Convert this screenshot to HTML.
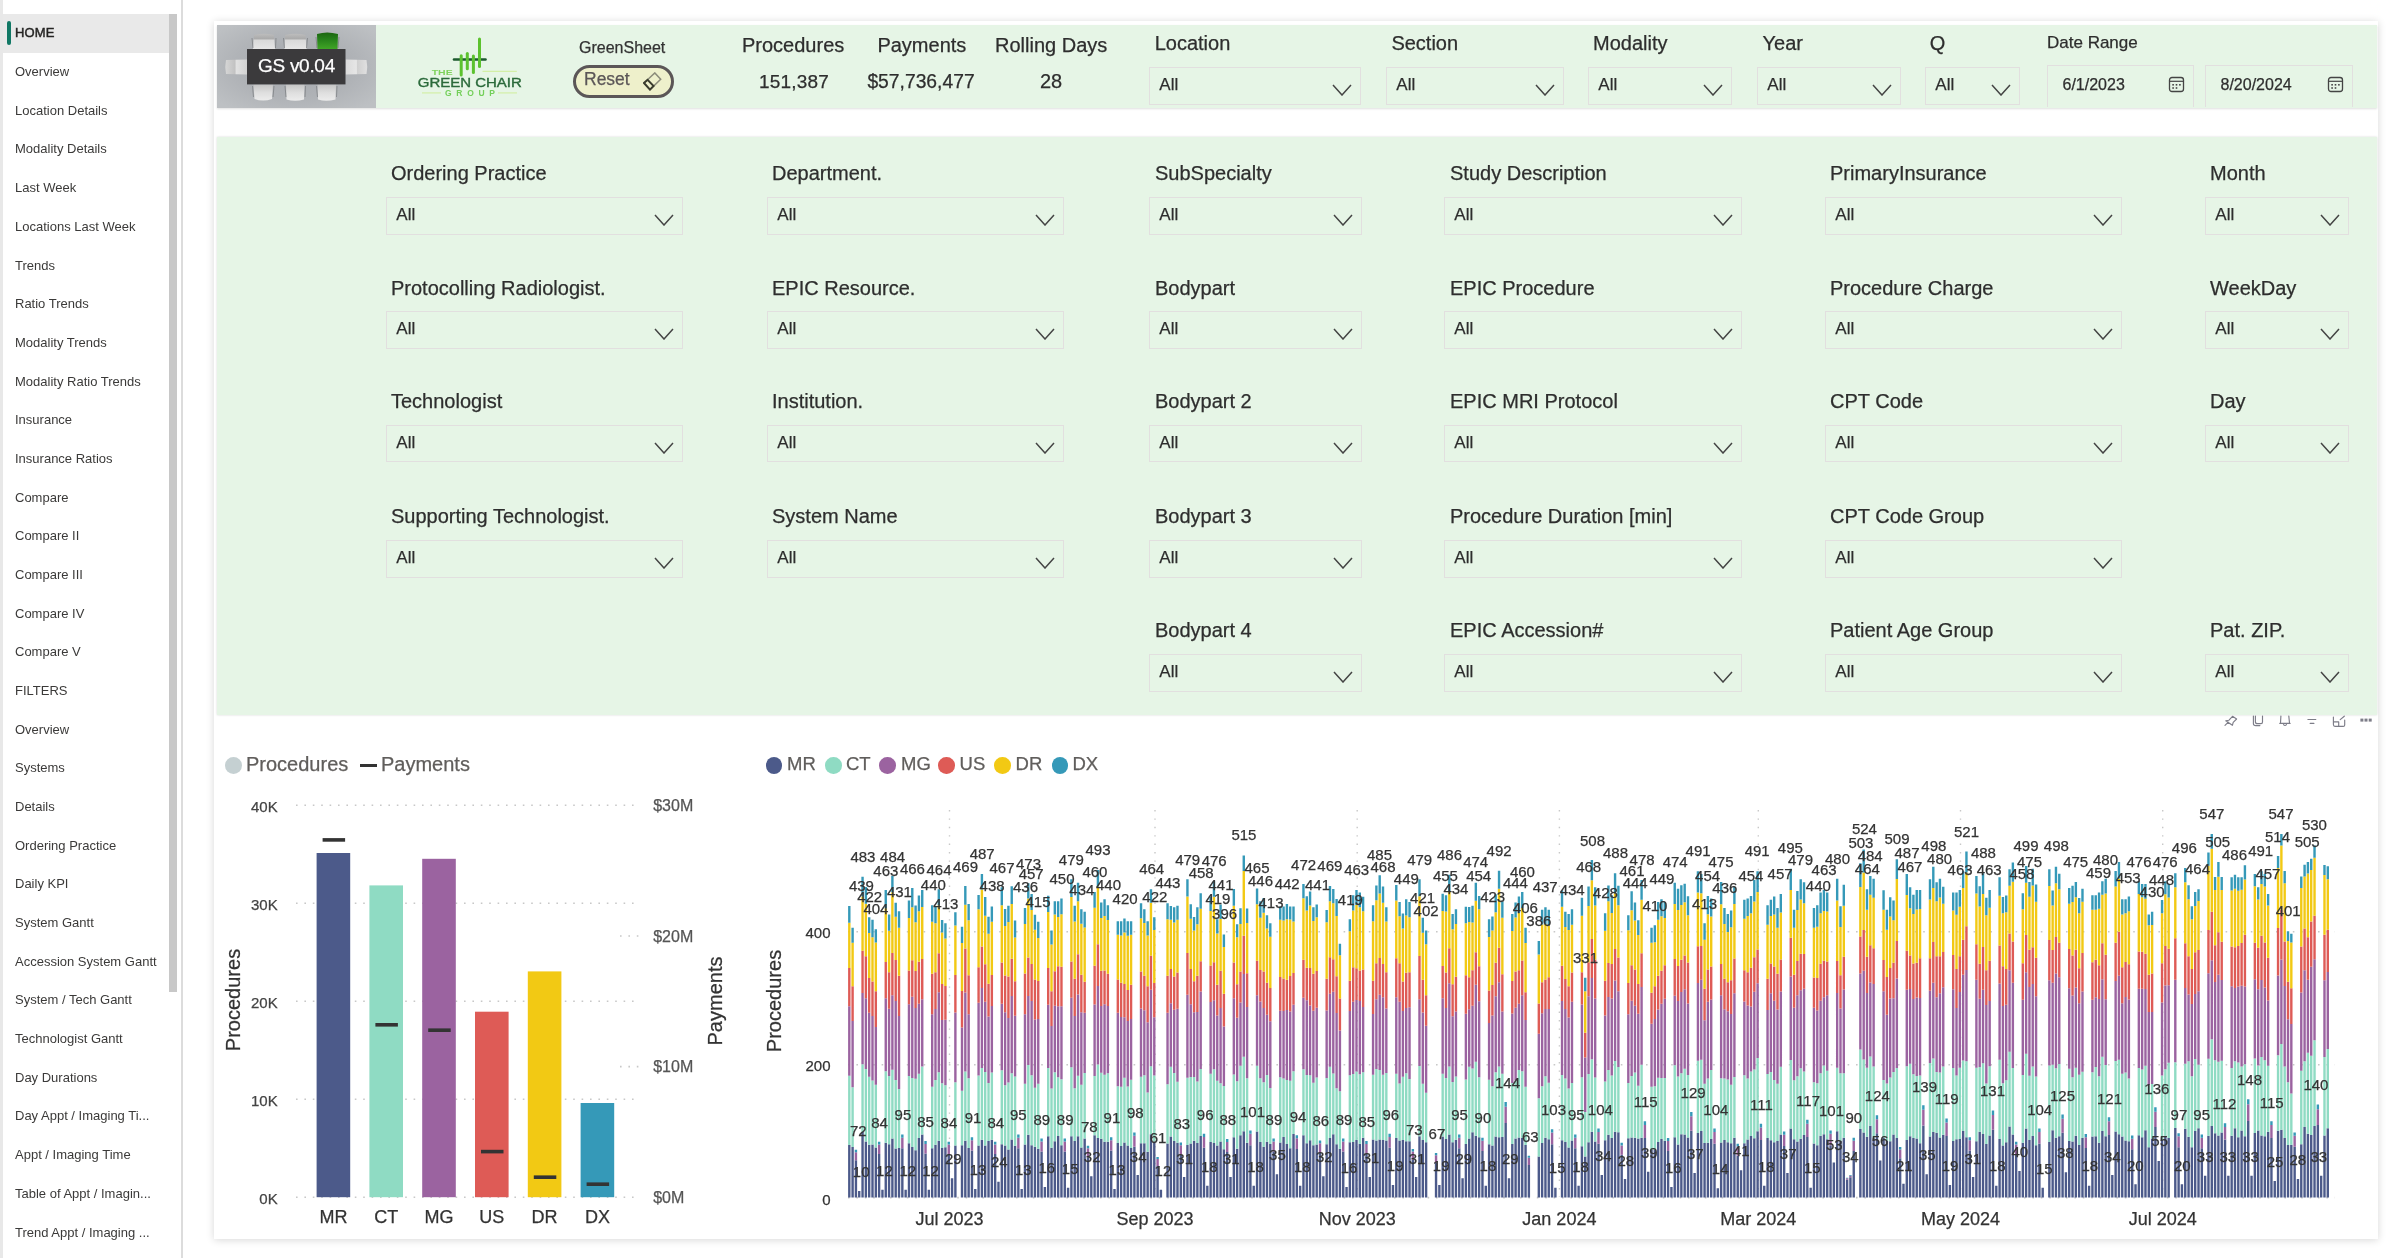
<!DOCTYPE html>
<html><head><meta charset="utf-8"><style>
html,body{margin:0;padding:0;}
body{width:2399px;height:1258px;position:relative;overflow:hidden;background:#fff;font-family:"Liberation Sans", sans-serif;}
.t{position:absolute;white-space:nowrap;line-height:1;font-family:"Liberation Sans", sans-serif;-webkit-text-stroke:0.25px currentColor;}
</style></head><body><div style="position:absolute;left:0;top:0;width:2399px;height:1258px;overflow:hidden;will-change:transform;">
<div style="position:absolute;left:0px;top:0px;width:3px;height:1258px;background:#e8e8e8;"></div>
<div style="position:absolute;left:3px;top:14px;width:166px;height:39px;background:#e9e9e9;"></div>
<div style="position:absolute;left:7px;top:20.5px;width:4px;height:24.5px;background:#117865;border-radius:2px;"></div>
<div style="position:absolute;left:169px;top:14px;width:8px;height:978px;background:#c8c8c8;"></div>
<div style="position:absolute;left:181px;top:0px;width:2px;height:1258px;background:#dcdcdc;"></div>
<div class="t" style="left:15.0px;top:26.4px;font-size:13px;color:#252423;font-weight:normal;-webkit-text-stroke:0.45px #252423;letter-spacing:0.1px;">HOME</div>
<div class="t" style="left:15.0px;top:65.1px;font-size:13px;color:#3b3a39;font-weight:normal;-webkit-text-stroke:0;">Overview</div>
<div class="t" style="left:15.0px;top:103.8px;font-size:13px;color:#3b3a39;font-weight:normal;-webkit-text-stroke:0;">Location Details</div>
<div class="t" style="left:15.0px;top:142.4px;font-size:13px;color:#3b3a39;font-weight:normal;-webkit-text-stroke:0;">Modality Details</div>
<div class="t" style="left:15.0px;top:181.1px;font-size:13px;color:#3b3a39;font-weight:normal;-webkit-text-stroke:0;">Last Week</div>
<div class="t" style="left:15.0px;top:219.8px;font-size:13px;color:#3b3a39;font-weight:normal;-webkit-text-stroke:0;">Locations Last Week</div>
<div class="t" style="left:15.0px;top:258.5px;font-size:13px;color:#3b3a39;font-weight:normal;-webkit-text-stroke:0;">Trends</div>
<div class="t" style="left:15.0px;top:297.2px;font-size:13px;color:#3b3a39;font-weight:normal;-webkit-text-stroke:0;">Ratio Trends</div>
<div class="t" style="left:15.0px;top:335.8px;font-size:13px;color:#3b3a39;font-weight:normal;-webkit-text-stroke:0;">Modality Trends</div>
<div class="t" style="left:15.0px;top:374.5px;font-size:13px;color:#3b3a39;font-weight:normal;-webkit-text-stroke:0;">Modality Ratio Trends</div>
<div class="t" style="left:15.0px;top:413.2px;font-size:13px;color:#3b3a39;font-weight:normal;-webkit-text-stroke:0;">Insurance</div>
<div class="t" style="left:15.0px;top:451.9px;font-size:13px;color:#3b3a39;font-weight:normal;-webkit-text-stroke:0;">Insurance Ratios</div>
<div class="t" style="left:15.0px;top:490.6px;font-size:13px;color:#3b3a39;font-weight:normal;-webkit-text-stroke:0;">Compare</div>
<div class="t" style="left:15.0px;top:529.2px;font-size:13px;color:#3b3a39;font-weight:normal;-webkit-text-stroke:0;">Compare II</div>
<div class="t" style="left:15.0px;top:567.9px;font-size:13px;color:#3b3a39;font-weight:normal;-webkit-text-stroke:0;">Compare III</div>
<div class="t" style="left:15.0px;top:606.6px;font-size:13px;color:#3b3a39;font-weight:normal;-webkit-text-stroke:0;">Compare IV</div>
<div class="t" style="left:15.0px;top:645.3px;font-size:13px;color:#3b3a39;font-weight:normal;-webkit-text-stroke:0;">Compare V</div>
<div class="t" style="left:15.0px;top:684.0px;font-size:13px;color:#3b3a39;font-weight:normal;-webkit-text-stroke:0;">FILTERS</div>
<div class="t" style="left:15.0px;top:722.6px;font-size:13px;color:#3b3a39;font-weight:normal;-webkit-text-stroke:0;">Overview</div>
<div class="t" style="left:15.0px;top:761.3px;font-size:13px;color:#3b3a39;font-weight:normal;-webkit-text-stroke:0;">Systems</div>
<div class="t" style="left:15.0px;top:800.0px;font-size:13px;color:#3b3a39;font-weight:normal;-webkit-text-stroke:0;">Details</div>
<div class="t" style="left:15.0px;top:838.7px;font-size:13px;color:#3b3a39;font-weight:normal;-webkit-text-stroke:0;">Ordering Practice</div>
<div class="t" style="left:15.0px;top:877.4px;font-size:13px;color:#3b3a39;font-weight:normal;-webkit-text-stroke:0;">Daily KPI</div>
<div class="t" style="left:15.0px;top:916.0px;font-size:13px;color:#3b3a39;font-weight:normal;-webkit-text-stroke:0;">System Gantt</div>
<div class="t" style="left:15.0px;top:954.7px;font-size:13px;color:#3b3a39;font-weight:normal;-webkit-text-stroke:0;">Accession System Gantt</div>
<div class="t" style="left:15.0px;top:993.4px;font-size:13px;color:#3b3a39;font-weight:normal;-webkit-text-stroke:0;">System / Tech Gantt</div>
<div class="t" style="left:15.0px;top:1032.1px;font-size:13px;color:#3b3a39;font-weight:normal;-webkit-text-stroke:0;">Technologist Gantt</div>
<div class="t" style="left:15.0px;top:1070.8px;font-size:13px;color:#3b3a39;font-weight:normal;-webkit-text-stroke:0;">Day Durations</div>
<div class="t" style="left:15.0px;top:1109.4px;font-size:13px;color:#3b3a39;font-weight:normal;-webkit-text-stroke:0;">Day Appt / Imaging Ti...</div>
<div class="t" style="left:15.0px;top:1148.1px;font-size:13px;color:#3b3a39;font-weight:normal;-webkit-text-stroke:0;">Appt / Imaging Time</div>
<div class="t" style="left:15.0px;top:1186.8px;font-size:13px;color:#3b3a39;font-weight:normal;-webkit-text-stroke:0;">Table of Appt / Imagin...</div>
<div class="t" style="left:15.0px;top:1225.5px;font-size:13px;color:#3b3a39;font-weight:normal;-webkit-text-stroke:0;">Trend Appt / Imaging ...</div>
<div style="position:absolute;left:214px;top:21px;width:2164px;height:1218px;background:#fff;box-shadow:0 1px 8px rgba(0,0,0,0.16);"></div>
<svg style="position:absolute;left:2220px;top:714px" width="160" height="16" viewBox="0 0 160 16" fill="none" stroke="#7d7d88" stroke-width="1.15" stroke-linejoin="round" stroke-linecap="round">
<path d="M5 11.3 L8.3 8.2 M5.75 6.75 L9 6.2 L12.5 2.3 L16.6 5 L13.2 8.4 L12.4 11.3 Z"/>
<path d="M33.4 2 V9.4 Q33.4 11.6 35.8 11.6 H39.9 M35.4 2 V7.9 Q35.4 9.6 37.6 9.6 H41 Q42.5 9.6 42.5 7.9 V2"/>
<path d="M60.9 2 L60.5 9 M68.8 2 L69.5 9 M59.8 9.4 H70.1 M63.5 10.6 Q65 12.3 66.5 10.6"/>
<path d="M87.9 5.5 H95.8 M90.2 9.4 H93.9"/>
<path d="M113.4 3 V10.5 Q113.4 12.4 115 12.4 H123.2 Q124.7 12.4 124.7 10.9 V6 M113.8 7.9 H118.7 V12.4 M120.2 5.6 L124.3 2.2"/>
<g fill="#7d7d88" stroke="none"><rect x="140.4" y="4.6" width="3" height="3"/><rect x="144.5" y="4.6" width="3" height="3"/><rect x="148.7" y="4.6" width="3" height="3"/></g>
</svg>
<div style="position:absolute;left:217px;top:25px;width:2160px;height:83px;background:#e6f5e6;box-shadow:0 1px 2px rgba(0,0,0,0.13);"></div>
<div style="position:absolute;left:217px;top:137px;width:2160px;height:578px;background:#e6f5e6;box-shadow:0 0 2px rgba(0,0,0,0.16);"></div>
<svg style="position:absolute;left:217px;top:25px" width="159" height="83" viewBox="0 0 159 83">
<defs>
<radialGradient id="bgg" cx="50%" cy="50%" r="65%"><stop offset="0" stop-color="#a3a6ab"/><stop offset="0.6" stop-color="#b0b3b7"/><stop offset="1" stop-color="#bdc0c3"/></radialGradient>
<linearGradient id="gch" x1="0" y1="0" x2="0" y2="1"><stop offset="0" stop-color="#1c6611"/><stop offset="0.4" stop-color="#26801a"/><stop offset="1" stop-color="#40a526"/></linearGradient>
<linearGradient id="wct" x1="0" y1="0" x2="0" y2="1"><stop offset="0" stop-color="#bdbdbd"/><stop offset="0.35" stop-color="#a9a9a9"/><stop offset="0.4" stop-color="#d9d9d9"/><stop offset="1" stop-color="#e6e6e6"/></linearGradient>
<linearGradient id="wcb" x1="0" y1="0" x2="0" y2="1"><stop offset="0" stop-color="#c4c4c4"/><stop offset="0.5" stop-color="#dedede"/><stop offset="1" stop-color="#ececec"/></linearGradient>
<linearGradient id="wcl" x1="0" y1="0" x2="1" y2="0"><stop offset="0" stop-color="#d6d6d6"/><stop offset="0.45" stop-color="#c2c2c2"/><stop offset="0.5" stop-color="#e2e2e2"/><stop offset="1" stop-color="#d2d2d2"/></linearGradient>
<linearGradient id="wcr" x1="1" y1="0" x2="0" y2="0"><stop offset="0" stop-color="#e0e0e0"/><stop offset="0.45" stop-color="#d0d0d0"/><stop offset="0.5" stop-color="#e6e6e6"/><stop offset="1" stop-color="#dadada"/></linearGradient>
</defs>
<rect width="159" height="83" fill="url(#bgg)"/>
<path d="M37 10 Q47 7.5 57 10 L58 24 L36 24 Z" fill="url(#wct)"/>
<path d="M68 10 Q78 7.5 88.5 10 L89.5 24 L67.5 24 Z" fill="url(#wct)"/>
<path d="M100 9 Q110 6 121 9 L120.5 24 L100.5 24 Z" fill="url(#gch)"/>
<path d="M36.5 59.5 L56 59.5 L55 74 Q46 77 37.5 74 Z" fill="url(#wcb)"/>
<path d="M69 59.5 L87.5 59.5 L87 74.5 Q78 77 69.5 74.5 Z" fill="url(#wcb)"/>
<path d="M100.5 59.5 L119 59.5 L118.5 74.5 Q109 77 101 74.5 Z" fill="url(#wcb)"/>
<path d="M9 35 L30 34.5 L30 49.5 L9 49 Q7.5 42 9 35 Z" fill="url(#wcl)"/>
<path d="M128.5 34.5 L149.5 35 Q151 42 149.5 49 L128.5 49.5 Z" fill="url(#wcr)"/>
<g stroke="#6b6d70" stroke-width="0.8" fill="none" opacity="0.7">
<path d="M35 13 L36 23 M59 13 L58.5 23 M66.5 13 L67.5 23 M90.5 13 L89.5 23 M99 12 L100 23 M122 12 L121 23"/>
<path d="M35.5 61 L36.5 72 M57 61 L56 72 M68 61 L69 72 M88.5 61 L88 72 M99.5 61 L100.5 72 M120 61 L119.5 72"/>
</g>
<rect x="30" y="24" width="98.5" height="35.4" fill="#3b3a3c"/>
</svg>
<div class="t" style="left:296.5px;transform:translateX(-50%);top:56.0px;font-size:19px;color:#fff;font-weight:normal;letter-spacing:-0.3px;">GS v0.04</div>
<svg style="position:absolute;left:410px;top:30px" width="120" height="70" viewBox="0 0 120 70">
<g stroke-linecap="round">
<line x1="44" y1="29.5" x2="75.5" y2="29.5" stroke="#1d5a2e" stroke-width="2.6"/>
<line x1="51.2" y1="25.8" x2="51.2" y2="45" stroke="#5cc22e" stroke-width="3"/>
<line x1="57.3" y1="23.5" x2="57.3" y2="38.7" stroke="#5cc22e" stroke-width="3"/>
<line x1="63.4" y1="26" x2="63.4" y2="42.5" stroke="#5cc22e" stroke-width="3"/>
<line x1="69.5" y1="9" x2="69.5" y2="36.5" stroke="#5cc22e" stroke-width="3"/>
</g>
<line x1="72.5" y1="41.4" x2="106.8" y2="41.4" stroke="#d3efa6" stroke-width="1.2"/>
<line x1="12" y1="62.9" x2="31" y2="62.9" stroke="#d3efa6" stroke-width="1.2"/>
<line x1="88" y1="62.9" x2="107" y2="62.9" stroke="#d3efa6" stroke-width="1.2"/>
<text x="21.7" y="44.8" font-family="Liberation Sans" font-weight="bold" font-size="7.6" fill="#7ed25c" textLength="21" lengthAdjust="spacingAndGlyphs">THE</text>
<text x="7.8" y="56.5" font-family="Liberation Sans" font-size="12" fill="#2b6a3b" stroke="#2b6a3b" stroke-width="0.35" textLength="104" lengthAdjust="spacingAndGlyphs">GREEN CHAIR</text>
<text x="35" y="65.6" font-family="Liberation Sans" font-weight="bold" font-size="8.5" fill="#74cf5a" textLength="50" lengthAdjust="spacing">GROUP</text>
</svg>
<div class="t" style="left:579.0px;top:40.3px;font-size:16px;color:#333;font-weight:normal;">GreenSheet</div>
<div style="position:absolute;left:573px;top:65px;width:95px;height:27px;border:3px solid #5b5657;border-radius:17px;background:#eef0cb;"></div>
<div class="t" style="left:584.0px;top:71.2px;font-size:17.5px;color:#5b5657;font-weight:normal;">Reset</div>
<svg style="position:absolute;left:643px;top:72px" width="20" height="20" viewBox="0 0 20 20">
<path d="M1 11 L7 17.6 L17.7 7.2 L11.8 0.9 Z" fill="none" stroke="#8c8c7a" stroke-width="1.5" stroke-linejoin="miter"/>
<path d="M1 11 L7 17.6 L10.6 14 L4.6 7.8 Z" fill="none" stroke="#3a3c2e" stroke-width="1.9"/>
</svg>
<div class="t" style="left:742.0px;top:35.3px;font-size:20px;color:#2e2e2e;font-weight:normal;">Procedures</div>
<div class="t" style="left:794.0px;transform:translateX(-50%);top:71.9px;font-size:19px;color:#2e2e2e;font-weight:normal;letter-spacing:0.2px;">151,387</div>
<div class="t" style="left:877.4px;top:35.3px;font-size:20px;color:#2e2e2e;font-weight:normal;">Payments</div>
<div class="t" style="left:921.0px;transform:translateX(-50%);top:71.7px;font-size:19.3px;color:#2e2e2e;font-weight:normal;">$57,736,477</div>
<div class="t" style="left:995.0px;top:35.3px;font-size:20px;color:#2e2e2e;font-weight:normal;">Rolling Days</div>
<div class="t" style="left:1051.0px;transform:translateX(-50%);top:71.1px;font-size:20px;color:#2e2e2e;font-weight:normal;">28</div>
<div class="t" style="left:1154.7px;top:33.4px;font-size:20px;color:#2e2e2e;font-weight:normal;">Location</div>
<div style="position:absolute;left:1149px;top:67px;width:210px;height:36px;border:1px solid #e2dfdf;"></div>
<div class="t" style="left:1159.3px;top:76.4px;font-size:17px;color:#2e2e2e;font-weight:normal;">All</div>
<svg style="position:absolute;left:1332.0px;top:84.0px" width="20" height="12"><polyline points="1,1 10.0,11 19,1" fill="none" stroke="#444" stroke-width="1.5"/></svg>
<div class="t" style="left:1391.4px;top:33.4px;font-size:20px;color:#2e2e2e;font-weight:normal;">Section</div>
<div style="position:absolute;left:1386px;top:67px;width:176px;height:36px;border:1px solid #e2dfdf;"></div>
<div class="t" style="left:1396.3px;top:76.4px;font-size:17px;color:#2e2e2e;font-weight:normal;">All</div>
<svg style="position:absolute;left:1535.0px;top:84.0px" width="20" height="12"><polyline points="1,1 10.0,11 19,1" fill="none" stroke="#444" stroke-width="1.5"/></svg>
<div class="t" style="left:1593.0px;top:33.4px;font-size:20px;color:#2e2e2e;font-weight:normal;">Modality</div>
<div style="position:absolute;left:1588px;top:67px;width:142px;height:36px;border:1px solid #e2dfdf;"></div>
<div class="t" style="left:1598.3px;top:76.4px;font-size:17px;color:#2e2e2e;font-weight:normal;">All</div>
<svg style="position:absolute;left:1703.0px;top:84.0px" width="20" height="12"><polyline points="1,1 10.0,11 19,1" fill="none" stroke="#444" stroke-width="1.5"/></svg>
<div class="t" style="left:1762.5px;top:33.4px;font-size:20px;color:#2e2e2e;font-weight:normal;">Year</div>
<div style="position:absolute;left:1757px;top:67px;width:142px;height:36px;border:1px solid #e2dfdf;"></div>
<div class="t" style="left:1767.3px;top:76.4px;font-size:17px;color:#2e2e2e;font-weight:normal;">All</div>
<svg style="position:absolute;left:1872.0px;top:84.0px" width="20" height="12"><polyline points="1,1 10.0,11 19,1" fill="none" stroke="#444" stroke-width="1.5"/></svg>
<div class="t" style="left:1929.7px;top:33.4px;font-size:20px;color:#2e2e2e;font-weight:normal;">Q</div>
<div style="position:absolute;left:1925px;top:67px;width:93px;height:36px;border:1px solid #e2dfdf;"></div>
<div class="t" style="left:1935.3px;top:76.4px;font-size:17px;color:#2e2e2e;font-weight:normal;">All</div>
<svg style="position:absolute;left:1991.0px;top:84.0px" width="20" height="12"><polyline points="1,1 10.0,11 19,1" fill="none" stroke="#444" stroke-width="1.5"/></svg>
<div class="t" style="left:2047.0px;top:34.1px;font-size:17px;color:#2e2e2e;font-weight:normal;">Date Range</div>
<div style="position:absolute;left:2047px;top:65px;width:145px;height:41px;border:1px solid #e2dfdf;border-bottom:none;"></div>
<div class="t" style="left:2062.5px;top:77.2px;font-size:16px;color:#2e2e2e;font-weight:normal;">6/1/2023</div>
<svg style="position:absolute;left:2168px;top:76px" width="17" height="17" viewBox="0 0 17 17"><rect x="1.5" y="1.5" width="14" height="14" rx="2.5" fill="none" stroke="#444" stroke-width="1.3"/><line x1="1.5" y1="5.3" x2="15.5" y2="5.3" stroke="#444" stroke-width="1.2"/><g fill="#444"><rect x="4.3" y="8" width="1.6" height="1.6"/><rect x="7.7" y="8" width="1.6" height="1.6"/><rect x="11.1" y="8" width="1.6" height="1.6"/><rect x="4.3" y="11.2" width="1.6" height="1.6"/><rect x="7.7" y="11.2" width="1.6" height="1.6"/></g></svg>
<div style="position:absolute;left:2205px;top:65px;width:146px;height:41px;border:1px solid #e2dfdf;border-bottom:none;"></div>
<div class="t" style="left:2220.5px;top:77.2px;font-size:16px;color:#2e2e2e;font-weight:normal;">8/20/2024</div>
<svg style="position:absolute;left:2327px;top:76px" width="17" height="17" viewBox="0 0 17 17"><rect x="1.5" y="1.5" width="14" height="14" rx="2.5" fill="none" stroke="#444" stroke-width="1.3"/><line x1="1.5" y1="5.3" x2="15.5" y2="5.3" stroke="#444" stroke-width="1.2"/><g fill="#444"><rect x="4.3" y="8" width="1.6" height="1.6"/><rect x="7.7" y="8" width="1.6" height="1.6"/><rect x="11.1" y="8" width="1.6" height="1.6"/><rect x="4.3" y="11.2" width="1.6" height="1.6"/><rect x="7.7" y="11.2" width="1.6" height="1.6"/></g></svg>
<div class="t" style="left:391.0px;top:163.3px;font-size:20px;color:#2e2e2e;font-weight:normal;">Ordering Practice</div>
<div style="position:absolute;left:386px;top:197px;width:295px;height:36px;border:1px solid #e2dfdf;"></div>
<div class="t" style="left:396.3px;top:206.4px;font-size:17px;color:#2e2e2e;font-weight:normal;">All</div>
<svg style="position:absolute;left:654.0px;top:214.0px" width="20" height="12"><polyline points="1,1 10.0,11 19,1" fill="none" stroke="#444" stroke-width="1.5"/></svg>
<div class="t" style="left:391.0px;top:277.6px;font-size:20px;color:#2e2e2e;font-weight:normal;">Protocolling Radiologist.</div>
<div style="position:absolute;left:386px;top:311px;width:295px;height:36px;border:1px solid #e2dfdf;"></div>
<div class="t" style="left:396.3px;top:320.4px;font-size:17px;color:#2e2e2e;font-weight:normal;">All</div>
<svg style="position:absolute;left:654.0px;top:328.0px" width="20" height="12"><polyline points="1,1 10.0,11 19,1" fill="none" stroke="#444" stroke-width="1.5"/></svg>
<div class="t" style="left:391.0px;top:391.1px;font-size:20px;color:#2e2e2e;font-weight:normal;">Technologist</div>
<div style="position:absolute;left:386px;top:425px;width:295px;height:35px;border:1px solid #e2dfdf;"></div>
<div class="t" style="left:396.3px;top:434.4px;font-size:17px;color:#2e2e2e;font-weight:normal;">All</div>
<svg style="position:absolute;left:654.0px;top:442.0px" width="20" height="12"><polyline points="1,1 10.0,11 19,1" fill="none" stroke="#444" stroke-width="1.5"/></svg>
<div class="t" style="left:391.0px;top:506.1px;font-size:20px;color:#2e2e2e;font-weight:normal;">Supporting Technologist.</div>
<div style="position:absolute;left:386px;top:540px;width:295px;height:36px;border:1px solid #e2dfdf;"></div>
<div class="t" style="left:396.3px;top:549.4px;font-size:17px;color:#2e2e2e;font-weight:normal;">All</div>
<svg style="position:absolute;left:654.0px;top:557.0px" width="20" height="12"><polyline points="1,1 10.0,11 19,1" fill="none" stroke="#444" stroke-width="1.5"/></svg>
<div class="t" style="left:772.0px;top:163.3px;font-size:20px;color:#2e2e2e;font-weight:normal;">Department.</div>
<div style="position:absolute;left:767px;top:197px;width:295px;height:36px;border:1px solid #e2dfdf;"></div>
<div class="t" style="left:777.3px;top:206.4px;font-size:17px;color:#2e2e2e;font-weight:normal;">All</div>
<svg style="position:absolute;left:1035.0px;top:214.0px" width="20" height="12"><polyline points="1,1 10.0,11 19,1" fill="none" stroke="#444" stroke-width="1.5"/></svg>
<div class="t" style="left:772.0px;top:277.6px;font-size:20px;color:#2e2e2e;font-weight:normal;">EPIC Resource.</div>
<div style="position:absolute;left:767px;top:311px;width:295px;height:36px;border:1px solid #e2dfdf;"></div>
<div class="t" style="left:777.3px;top:320.4px;font-size:17px;color:#2e2e2e;font-weight:normal;">All</div>
<svg style="position:absolute;left:1035.0px;top:328.0px" width="20" height="12"><polyline points="1,1 10.0,11 19,1" fill="none" stroke="#444" stroke-width="1.5"/></svg>
<div class="t" style="left:772.0px;top:391.1px;font-size:20px;color:#2e2e2e;font-weight:normal;">Institution.</div>
<div style="position:absolute;left:767px;top:425px;width:295px;height:35px;border:1px solid #e2dfdf;"></div>
<div class="t" style="left:777.3px;top:434.4px;font-size:17px;color:#2e2e2e;font-weight:normal;">All</div>
<svg style="position:absolute;left:1035.0px;top:442.0px" width="20" height="12"><polyline points="1,1 10.0,11 19,1" fill="none" stroke="#444" stroke-width="1.5"/></svg>
<div class="t" style="left:772.0px;top:506.1px;font-size:20px;color:#2e2e2e;font-weight:normal;">System Name</div>
<div style="position:absolute;left:767px;top:540px;width:295px;height:36px;border:1px solid #e2dfdf;"></div>
<div class="t" style="left:777.3px;top:549.4px;font-size:17px;color:#2e2e2e;font-weight:normal;">All</div>
<svg style="position:absolute;left:1035.0px;top:557.0px" width="20" height="12"><polyline points="1,1 10.0,11 19,1" fill="none" stroke="#444" stroke-width="1.5"/></svg>
<div class="t" style="left:1155.0px;top:163.3px;font-size:20px;color:#2e2e2e;font-weight:normal;">SubSpecialty</div>
<div style="position:absolute;left:1149px;top:197px;width:211px;height:36px;border:1px solid #e2dfdf;"></div>
<div class="t" style="left:1159.3px;top:206.4px;font-size:17px;color:#2e2e2e;font-weight:normal;">All</div>
<svg style="position:absolute;left:1333.0px;top:214.0px" width="20" height="12"><polyline points="1,1 10.0,11 19,1" fill="none" stroke="#444" stroke-width="1.5"/></svg>
<div class="t" style="left:1155.0px;top:277.6px;font-size:20px;color:#2e2e2e;font-weight:normal;">Bodypart</div>
<div style="position:absolute;left:1149px;top:311px;width:211px;height:36px;border:1px solid #e2dfdf;"></div>
<div class="t" style="left:1159.3px;top:320.4px;font-size:17px;color:#2e2e2e;font-weight:normal;">All</div>
<svg style="position:absolute;left:1333.0px;top:328.0px" width="20" height="12"><polyline points="1,1 10.0,11 19,1" fill="none" stroke="#444" stroke-width="1.5"/></svg>
<div class="t" style="left:1155.0px;top:391.1px;font-size:20px;color:#2e2e2e;font-weight:normal;">Bodypart 2</div>
<div style="position:absolute;left:1149px;top:425px;width:211px;height:35px;border:1px solid #e2dfdf;"></div>
<div class="t" style="left:1159.3px;top:434.4px;font-size:17px;color:#2e2e2e;font-weight:normal;">All</div>
<svg style="position:absolute;left:1333.0px;top:442.0px" width="20" height="12"><polyline points="1,1 10.0,11 19,1" fill="none" stroke="#444" stroke-width="1.5"/></svg>
<div class="t" style="left:1155.0px;top:506.1px;font-size:20px;color:#2e2e2e;font-weight:normal;">Bodypart 3</div>
<div style="position:absolute;left:1149px;top:540px;width:211px;height:36px;border:1px solid #e2dfdf;"></div>
<div class="t" style="left:1159.3px;top:549.4px;font-size:17px;color:#2e2e2e;font-weight:normal;">All</div>
<svg style="position:absolute;left:1333.0px;top:557.0px" width="20" height="12"><polyline points="1,1 10.0,11 19,1" fill="none" stroke="#444" stroke-width="1.5"/></svg>
<div class="t" style="left:1155.0px;top:619.6px;font-size:20px;color:#2e2e2e;font-weight:normal;">Bodypart 4</div>
<div style="position:absolute;left:1149px;top:654px;width:211px;height:36px;border:1px solid #e2dfdf;"></div>
<div class="t" style="left:1159.3px;top:663.4px;font-size:17px;color:#2e2e2e;font-weight:normal;">All</div>
<svg style="position:absolute;left:1333.0px;top:671.0px" width="20" height="12"><polyline points="1,1 10.0,11 19,1" fill="none" stroke="#444" stroke-width="1.5"/></svg>
<div class="t" style="left:1450.0px;top:163.3px;font-size:20px;color:#2e2e2e;font-weight:normal;">Study Description</div>
<div style="position:absolute;left:1444px;top:197px;width:296px;height:36px;border:1px solid #e2dfdf;"></div>
<div class="t" style="left:1454.3px;top:206.4px;font-size:17px;color:#2e2e2e;font-weight:normal;">All</div>
<svg style="position:absolute;left:1713.0px;top:214.0px" width="20" height="12"><polyline points="1,1 10.0,11 19,1" fill="none" stroke="#444" stroke-width="1.5"/></svg>
<div class="t" style="left:1450.0px;top:277.6px;font-size:20px;color:#2e2e2e;font-weight:normal;">EPIC Procedure</div>
<div style="position:absolute;left:1444px;top:311px;width:296px;height:36px;border:1px solid #e2dfdf;"></div>
<div class="t" style="left:1454.3px;top:320.4px;font-size:17px;color:#2e2e2e;font-weight:normal;">All</div>
<svg style="position:absolute;left:1713.0px;top:328.0px" width="20" height="12"><polyline points="1,1 10.0,11 19,1" fill="none" stroke="#444" stroke-width="1.5"/></svg>
<div class="t" style="left:1450.0px;top:391.1px;font-size:20px;color:#2e2e2e;font-weight:normal;">EPIC MRI Protocol</div>
<div style="position:absolute;left:1444px;top:425px;width:296px;height:35px;border:1px solid #e2dfdf;"></div>
<div class="t" style="left:1454.3px;top:434.4px;font-size:17px;color:#2e2e2e;font-weight:normal;">All</div>
<svg style="position:absolute;left:1713.0px;top:442.0px" width="20" height="12"><polyline points="1,1 10.0,11 19,1" fill="none" stroke="#444" stroke-width="1.5"/></svg>
<div class="t" style="left:1450.0px;top:506.1px;font-size:20px;color:#2e2e2e;font-weight:normal;">Procedure Duration [min]</div>
<div style="position:absolute;left:1444px;top:540px;width:296px;height:36px;border:1px solid #e2dfdf;"></div>
<div class="t" style="left:1454.3px;top:549.4px;font-size:17px;color:#2e2e2e;font-weight:normal;">All</div>
<svg style="position:absolute;left:1713.0px;top:557.0px" width="20" height="12"><polyline points="1,1 10.0,11 19,1" fill="none" stroke="#444" stroke-width="1.5"/></svg>
<div class="t" style="left:1450.0px;top:619.6px;font-size:20px;color:#2e2e2e;font-weight:normal;">EPIC Accession#</div>
<div style="position:absolute;left:1444px;top:654px;width:296px;height:36px;border:1px solid #e2dfdf;"></div>
<div class="t" style="left:1454.3px;top:663.4px;font-size:17px;color:#2e2e2e;font-weight:normal;">All</div>
<svg style="position:absolute;left:1713.0px;top:671.0px" width="20" height="12"><polyline points="1,1 10.0,11 19,1" fill="none" stroke="#444" stroke-width="1.5"/></svg>
<div class="t" style="left:1830.0px;top:163.3px;font-size:20px;color:#2e2e2e;font-weight:normal;">PrimaryInsurance</div>
<div style="position:absolute;left:1825px;top:197px;width:295px;height:36px;border:1px solid #e2dfdf;"></div>
<div class="t" style="left:1835.3px;top:206.4px;font-size:17px;color:#2e2e2e;font-weight:normal;">All</div>
<svg style="position:absolute;left:2093.0px;top:214.0px" width="20" height="12"><polyline points="1,1 10.0,11 19,1" fill="none" stroke="#444" stroke-width="1.5"/></svg>
<div class="t" style="left:1830.0px;top:277.6px;font-size:20px;color:#2e2e2e;font-weight:normal;">Procedure Charge</div>
<div style="position:absolute;left:1825px;top:311px;width:295px;height:36px;border:1px solid #e2dfdf;"></div>
<div class="t" style="left:1835.3px;top:320.4px;font-size:17px;color:#2e2e2e;font-weight:normal;">All</div>
<svg style="position:absolute;left:2093.0px;top:328.0px" width="20" height="12"><polyline points="1,1 10.0,11 19,1" fill="none" stroke="#444" stroke-width="1.5"/></svg>
<div class="t" style="left:1830.0px;top:391.1px;font-size:20px;color:#2e2e2e;font-weight:normal;">CPT Code</div>
<div style="position:absolute;left:1825px;top:425px;width:295px;height:35px;border:1px solid #e2dfdf;"></div>
<div class="t" style="left:1835.3px;top:434.4px;font-size:17px;color:#2e2e2e;font-weight:normal;">All</div>
<svg style="position:absolute;left:2093.0px;top:442.0px" width="20" height="12"><polyline points="1,1 10.0,11 19,1" fill="none" stroke="#444" stroke-width="1.5"/></svg>
<div class="t" style="left:1830.0px;top:506.1px;font-size:20px;color:#2e2e2e;font-weight:normal;">CPT Code Group</div>
<div style="position:absolute;left:1825px;top:540px;width:295px;height:36px;border:1px solid #e2dfdf;"></div>
<div class="t" style="left:1835.3px;top:549.4px;font-size:17px;color:#2e2e2e;font-weight:normal;">All</div>
<svg style="position:absolute;left:2093.0px;top:557.0px" width="20" height="12"><polyline points="1,1 10.0,11 19,1" fill="none" stroke="#444" stroke-width="1.5"/></svg>
<div class="t" style="left:1830.0px;top:619.6px;font-size:20px;color:#2e2e2e;font-weight:normal;">Patient Age Group</div>
<div style="position:absolute;left:1825px;top:654px;width:295px;height:36px;border:1px solid #e2dfdf;"></div>
<div class="t" style="left:1835.3px;top:663.4px;font-size:17px;color:#2e2e2e;font-weight:normal;">All</div>
<svg style="position:absolute;left:2093.0px;top:671.0px" width="20" height="12"><polyline points="1,1 10.0,11 19,1" fill="none" stroke="#444" stroke-width="1.5"/></svg>
<div class="t" style="left:2210.0px;top:163.3px;font-size:20px;color:#2e2e2e;font-weight:normal;">Month</div>
<div style="position:absolute;left:2205px;top:197px;width:142px;height:36px;border:1px solid #e2dfdf;"></div>
<div class="t" style="left:2215.3px;top:206.4px;font-size:17px;color:#2e2e2e;font-weight:normal;">All</div>
<svg style="position:absolute;left:2320.0px;top:214.0px" width="20" height="12"><polyline points="1,1 10.0,11 19,1" fill="none" stroke="#444" stroke-width="1.5"/></svg>
<div class="t" style="left:2210.0px;top:277.6px;font-size:20px;color:#2e2e2e;font-weight:normal;">WeekDay</div>
<div style="position:absolute;left:2205px;top:311px;width:142px;height:36px;border:1px solid #e2dfdf;"></div>
<div class="t" style="left:2215.3px;top:320.4px;font-size:17px;color:#2e2e2e;font-weight:normal;">All</div>
<svg style="position:absolute;left:2320.0px;top:328.0px" width="20" height="12"><polyline points="1,1 10.0,11 19,1" fill="none" stroke="#444" stroke-width="1.5"/></svg>
<div class="t" style="left:2210.0px;top:391.1px;font-size:20px;color:#2e2e2e;font-weight:normal;">Day</div>
<div style="position:absolute;left:2205px;top:425px;width:142px;height:35px;border:1px solid #e2dfdf;"></div>
<div class="t" style="left:2215.3px;top:434.4px;font-size:17px;color:#2e2e2e;font-weight:normal;">All</div>
<svg style="position:absolute;left:2320.0px;top:442.0px" width="20" height="12"><polyline points="1,1 10.0,11 19,1" fill="none" stroke="#444" stroke-width="1.5"/></svg>
<div class="t" style="left:2210.0px;top:619.6px;font-size:20px;color:#2e2e2e;font-weight:normal;">Pat. ZIP.</div>
<div style="position:absolute;left:2205px;top:654px;width:142px;height:36px;border:1px solid #e2dfdf;"></div>
<div class="t" style="left:2215.3px;top:663.4px;font-size:17px;color:#2e2e2e;font-weight:normal;">All</div>
<svg style="position:absolute;left:2320.0px;top:671.0px" width="20" height="12"><polyline points="1,1 10.0,11 19,1" fill="none" stroke="#444" stroke-width="1.5"/></svg>
<div style="position:absolute;left:224.7px;top:757px;width:17px;height:17px;border-radius:50%;background:#c5d0d2"></div>
<div class="t" style="left:246.0px;top:753.5px;font-size:20px;color:#605e5c;font-weight:normal;">Procedures</div>
<div style="position:absolute;left:360px;top:764px;width:17px;height:3px;background:#333;"></div>
<div class="t" style="left:381.0px;top:753.5px;font-size:20px;color:#605e5c;font-weight:normal;">Payments</div>
<div class="t" style="right:2121.3px;top:798.5px;font-size:15px;color:#444;font-weight:normal;">40K</div>
<div class="t" style="right:2121.3px;top:896.5px;font-size:15px;color:#444;font-weight:normal;">30K</div>
<div class="t" style="right:2121.3px;top:994.5px;font-size:15px;color:#444;font-weight:normal;">20K</div>
<div class="t" style="right:2121.3px;top:1092.5px;font-size:15px;color:#444;font-weight:normal;">10K</div>
<div class="t" style="right:2121.3px;top:1190.5px;font-size:15px;color:#444;font-weight:normal;">0K</div>
<div class="t" style="left:653.2px;top:797.7px;font-size:16px;color:#555;font-weight:normal;">$30M</div>
<div class="t" style="left:653.2px;top:928.5px;font-size:16px;color:#555;font-weight:normal;">$20M</div>
<div class="t" style="left:653.2px;top:1059.1px;font-size:16px;color:#555;font-weight:normal;">$10M</div>
<div class="t" style="left:653.2px;top:1189.7px;font-size:16px;color:#555;font-weight:normal;">$0M</div>
<div class="t" style="left:333.4px;transform:translateX(-50%);top:1208.1px;font-size:18px;color:#333;font-weight:normal;">MR</div>
<div class="t" style="left:386.2px;transform:translateX(-50%);top:1208.1px;font-size:18px;color:#333;font-weight:normal;">CT</div>
<div class="t" style="left:439.0px;transform:translateX(-50%);top:1208.1px;font-size:18px;color:#333;font-weight:normal;">MG</div>
<div class="t" style="left:491.8px;transform:translateX(-50%);top:1208.1px;font-size:18px;color:#333;font-weight:normal;">US</div>
<div class="t" style="left:544.6px;transform:translateX(-50%);top:1208.1px;font-size:18px;color:#333;font-weight:normal;">DR</div>
<div class="t" style="left:597.4px;transform:translateX(-50%);top:1208.1px;font-size:18px;color:#333;font-weight:normal;">DX</div>
<div class="t" style="left:233px;top:1000px;font-size:20px;color:#333;transform:translate(-50%,-50%) rotate(-90deg);">Procedures</div>
<div class="t" style="left:715px;top:1000.5px;font-size:20px;color:#333;transform:translate(-50%,-50%) rotate(-90deg);">Payments</div>
<div style="position:absolute;left:765.8px;top:757.3px;width:16.6px;height:16.6px;border-radius:50%;background:#4c5a8a"></div>
<div class="t" style="left:787.0px;top:754.9px;font-size:18.5px;color:#605e5c;font-weight:normal;">MR</div>
<div style="position:absolute;left:825px;top:757.3px;width:16.6px;height:16.6px;border-radius:50%;background:#8fdbc3"></div>
<div class="t" style="left:846.0px;top:754.9px;font-size:18.5px;color:#605e5c;font-weight:normal;">CT</div>
<div style="position:absolute;left:879.2px;top:757.3px;width:16.6px;height:16.6px;border-radius:50%;background:#9b63a0"></div>
<div class="t" style="left:901.0px;top:754.9px;font-size:18.5px;color:#605e5c;font-weight:normal;">MG</div>
<div style="position:absolute;left:938.3px;top:757.3px;width:16.6px;height:16.6px;border-radius:50%;background:#de5b56"></div>
<div class="t" style="left:959.6px;top:754.9px;font-size:18.5px;color:#605e5c;font-weight:normal;">US</div>
<div style="position:absolute;left:994px;top:757.3px;width:16.6px;height:16.6px;border-radius:50%;background:#f2c914"></div>
<div class="t" style="left:1015.6px;top:754.9px;font-size:18.5px;color:#605e5c;font-weight:normal;">DR</div>
<div style="position:absolute;left:1051.8px;top:757.3px;width:16.6px;height:16.6px;border-radius:50%;background:#3599b8"></div>
<div class="t" style="left:1072.4px;top:754.9px;font-size:18.5px;color:#605e5c;font-weight:normal;">DX</div>
<div class="t" style="right:1568.5px;top:924.9px;font-size:15px;color:#333;font-weight:normal;">400</div>
<div class="t" style="right:1568.5px;top:1058.3px;font-size:15px;color:#333;font-weight:normal;">200</div>
<div class="t" style="right:1568.4px;top:1191.7px;font-size:15px;color:#333;font-weight:normal;">0</div>
<div class="t" style="left:774px;top:1000.5px;font-size:20px;color:#333;transform:translate(-50%,-50%) rotate(-90deg);">Procedures</div>
<div class="t" style="left:949.5px;transform:translateX(-50%);top:1210.2px;font-size:18px;color:#333;font-weight:normal;">Jul 2023</div>
<div class="t" style="left:1155.0px;transform:translateX(-50%);top:1210.2px;font-size:18px;color:#333;font-weight:normal;">Sep 2023</div>
<div class="t" style="left:1357.2px;transform:translateX(-50%);top:1210.2px;font-size:18px;color:#333;font-weight:normal;">Nov 2023</div>
<div class="t" style="left:1559.4px;transform:translateX(-50%);top:1210.2px;font-size:18px;color:#333;font-weight:normal;">Jan 2024</div>
<div class="t" style="left:1758.3px;transform:translateX(-50%);top:1210.2px;font-size:18px;color:#333;font-weight:normal;">Mar 2024</div>
<div class="t" style="left:1960.5px;transform:translateX(-50%);top:1210.2px;font-size:18px;color:#333;font-weight:normal;">May 2024</div>
<div class="t" style="left:2162.7px;transform:translateX(-50%);top:1210.2px;font-size:18px;color:#333;font-weight:normal;">Jul 2024</div>
<svg style="position:absolute;left:0;top:0" width="2399" height="1258">
<line x1="296" y1="805.2" x2="636" y2="805.2" stroke="#c8c8c8" stroke-width="1.6" stroke-dasharray="1.6 6.8"/>
<line x1="296" y1="903.2" x2="636" y2="903.2" stroke="#c8c8c8" stroke-width="1.6" stroke-dasharray="1.6 6.8"/>
<line x1="296" y1="1001.2" x2="636" y2="1001.2" stroke="#c8c8c8" stroke-width="1.6" stroke-dasharray="1.6 6.8"/>
<line x1="296" y1="1099.2" x2="636" y2="1099.2" stroke="#c8c8c8" stroke-width="1.6" stroke-dasharray="1.6 6.8"/>
<line x1="296" y1="1197.2" x2="636" y2="1197.2" stroke="#c8c8c8" stroke-width="1.6" stroke-dasharray="1.6 6.8"/>
<line x1="620" y1="936" x2="640" y2="936" stroke="#c8c8c8" stroke-width="1.6" stroke-dasharray="1.6 6.8"/>
<line x1="620" y1="1066.6" x2="640" y2="1066.6" stroke="#c8c8c8" stroke-width="1.6" stroke-dasharray="1.6 6.8"/>
<rect x="316.6" y="853" width="33.6" height="344.2" fill="#4c5a8a"/>
<rect x="322.6" y="838.1" width="22.5" height="3.6" fill="#333"/>
<rect x="369.4" y="885.4" width="33.6" height="311.8" fill="#8fdbc3"/>
<rect x="375.4" y="1023.0" width="22.5" height="3.6" fill="#333"/>
<rect x="422.2" y="858.8" width="33.6" height="338.4" fill="#9b63a0"/>
<rect x="428.2" y="1028.4" width="22.5" height="3.6" fill="#333"/>
<rect x="475" y="1011.7" width="33.6" height="185.5" fill="#de5b56"/>
<rect x="481" y="1149.8" width="22.5" height="3.6" fill="#333"/>
<rect x="527.8" y="971.4" width="33.6" height="225.8" fill="#f2c914"/>
<rect x="533.8" y="1175.4" width="22.5" height="3.6" fill="#333"/>
<rect x="580.6" y="1103" width="33.6" height="94.2" fill="#3599b8"/>
<rect x="586.6" y="1182.4" width="22.5" height="3.6" fill="#333"/>
<line x1="848" y1="1197.6" x2="2335" y2="1197.6" stroke="#c8c8c8" stroke-width="1.6" stroke-dasharray="1.6 6.8"/>
<line x1="848" y1="1064.6999999999998" x2="2335" y2="1064.6999999999998" stroke="#c8c8c8" stroke-width="1.6" stroke-dasharray="1.6 6.8"/>
<line x1="848" y1="931.8" x2="2335" y2="931.8" stroke="#c8c8c8" stroke-width="1.6" stroke-dasharray="1.6 6.8"/>
<line x1="949.5" y1="810" x2="949.5" y2="1197" stroke="#c8c8c8" stroke-width="1.4" stroke-dasharray="1.4 7"/>
<line x1="1155.0" y1="810" x2="1155.0" y2="1197" stroke="#c8c8c8" stroke-width="1.4" stroke-dasharray="1.4 7"/>
<line x1="1357.2" y1="810" x2="1357.2" y2="1197" stroke="#c8c8c8" stroke-width="1.4" stroke-dasharray="1.4 7"/>
<line x1="1559.4" y1="810" x2="1559.4" y2="1197" stroke="#c8c8c8" stroke-width="1.4" stroke-dasharray="1.4 7"/>
<line x1="1758.3" y1="810" x2="1758.3" y2="1197" stroke="#c8c8c8" stroke-width="1.4" stroke-dasharray="1.4 7"/>
<line x1="1960.5" y1="810" x2="1960.5" y2="1197" stroke="#c8c8c8" stroke-width="1.4" stroke-dasharray="1.4 7"/>
<line x1="2162.7" y1="810" x2="2162.7" y2="1197" stroke="#c8c8c8" stroke-width="1.4" stroke-dasharray="1.4 7"/>
<path fill="#4c5a8a" d="M848.10 1144.92h2.4V1197.60h-2.4zM851.41 1147.12h2.4V1197.60h-2.4zM854.73 1160.28h2.4V1197.60h-2.4zM858.04 1190.95h2.4V1197.60h-2.4zM861.36 1132.02h2.4V1197.60h-2.4zM864.67 1141.39h2.4V1197.60h-2.4zM867.99 1144.84h2.4V1197.60h-2.4zM871.30 1144.53h2.4V1197.60h-2.4zM874.62 1147.52h2.4V1197.60h-2.4zM877.93 1154.06h2.4V1197.60h-2.4zM881.25 1189.63h2.4V1197.60h-2.4zM884.56 1142.87h2.4V1197.60h-2.4zM887.88 1144.15h2.4V1197.60h-2.4zM891.19 1138.44h2.4V1197.60h-2.4zM894.51 1148.44h2.4V1197.60h-2.4zM897.82 1148.12h2.4V1197.60h-2.4zM901.14 1148.36h2.4V1197.60h-2.4zM904.45 1189.63h2.4V1197.60h-2.4zM907.77 1143.15h2.4V1197.60h-2.4zM911.08 1146.99h2.4V1197.60h-2.4zM914.40 1150.14h2.4V1197.60h-2.4zM917.71 1138.09h2.4V1197.60h-2.4zM921.03 1134.51h2.4V1197.60h-2.4zM924.34 1153.54h2.4V1197.60h-2.4zM927.66 1189.63h2.4V1197.60h-2.4zM930.97 1148.19h2.4V1197.60h-2.4zM934.29 1144.65h2.4V1197.60h-2.4zM937.60 1140.77h2.4V1197.60h-2.4zM940.92 1147.90h2.4V1197.60h-2.4zM944.23 1147.27h2.4V1197.60h-2.4zM947.55 1154.06h2.4V1197.60h-2.4zM950.86 1178.33h2.4V1197.60h-2.4zM954.18 1145.47h2.4V1197.60h-2.4zM960.81 1145.21h2.4V1197.60h-2.4zM964.12 1140.66h2.4V1197.60h-2.4zM967.44 1148.12h2.4V1197.60h-2.4zM970.75 1150.43h2.4V1197.60h-2.4zM974.07 1188.96h2.4V1197.60h-2.4zM977.38 1145.60h2.4V1197.60h-2.4zM980.70 1139.84h2.4V1197.60h-2.4zM984.01 1145.49h2.4V1197.60h-2.4zM987.33 1140.94h2.4V1197.60h-2.4zM990.64 1139.80h2.4V1197.60h-2.4zM993.96 1154.06h2.4V1197.60h-2.4zM997.27 1181.65h2.4V1197.60h-2.4zM1000.59 1144.35h2.4V1197.60h-2.4zM1003.90 1145.45h2.4V1197.60h-2.4zM1007.22 1149.49h2.4V1197.60h-2.4zM1010.53 1139.59h2.4V1197.60h-2.4zM1013.85 1145.82h2.4V1197.60h-2.4zM1017.16 1148.36h2.4V1197.60h-2.4zM1020.48 1188.96h2.4V1197.60h-2.4zM1023.79 1144.61h2.4V1197.60h-2.4zM1027.11 1134.63h2.4V1197.60h-2.4zM1030.42 1145.26h2.4V1197.60h-2.4zM1033.74 1146.74h2.4V1197.60h-2.4zM1037.05 1148.65h2.4V1197.60h-2.4zM1040.37 1151.47h2.4V1197.60h-2.4zM1043.68 1186.97h2.4V1197.60h-2.4zM1047.00 1136.29h2.4V1197.60h-2.4zM1050.31 1147.64h2.4V1197.60h-2.4zM1053.63 1141.24h2.4V1197.60h-2.4zM1056.94 1135.89h2.4V1197.60h-2.4zM1060.26 1145.32h2.4V1197.60h-2.4zM1063.57 1151.47h2.4V1197.60h-2.4zM1066.89 1187.63h2.4V1197.60h-2.4zM1070.20 1136.29h2.4V1197.60h-2.4zM1073.52 1140.99h2.4V1197.60h-2.4zM1076.83 1136.28h2.4V1197.60h-2.4zM1080.15 1147.50h2.4V1197.60h-2.4zM1083.46 1138.48h2.4V1197.60h-2.4zM1086.78 1157.17h2.4V1197.60h-2.4zM1090.10 1176.34h2.4V1197.60h-2.4zM1093.41 1135.20h2.4V1197.60h-2.4zM1096.72 1137.96h2.4V1197.60h-2.4zM1100.04 1138.84h2.4V1197.60h-2.4zM1103.35 1141.65h2.4V1197.60h-2.4zM1106.67 1141.85h2.4V1197.60h-2.4zM1109.98 1150.43h2.4V1197.60h-2.4zM1113.30 1188.96h2.4V1197.60h-2.4zM1116.62 1142.90h2.4V1197.60h-2.4zM1119.93 1146.10h2.4V1197.60h-2.4zM1123.24 1142.61h2.4V1197.60h-2.4zM1126.56 1145.61h2.4V1197.60h-2.4zM1129.87 1148.08h2.4V1197.60h-2.4zM1133.19 1146.81h2.4V1197.60h-2.4zM1136.50 1175.01h2.4V1197.60h-2.4zM1139.82 1143.15h2.4V1197.60h-2.4zM1143.13 1143.14h2.4V1197.60h-2.4zM1146.45 1151.78h2.4V1197.60h-2.4zM1149.76 1134.26h2.4V1197.60h-2.4zM1153.08 1141.57h2.4V1197.60h-2.4zM1156.39 1165.98h2.4V1197.60h-2.4zM1159.71 1189.63h2.4V1197.60h-2.4zM1166.34 1143.61h2.4V1197.60h-2.4zM1169.65 1136.40h2.4V1197.60h-2.4zM1172.97 1141.06h2.4V1197.60h-2.4zM1176.28 1142.63h2.4V1197.60h-2.4zM1179.60 1154.58h2.4V1197.60h-2.4zM1182.91 1177.00h2.4V1197.60h-2.4zM1186.23 1145.04h2.4V1197.60h-2.4zM1189.54 1143.38h2.4V1197.60h-2.4zM1192.86 1140.80h2.4V1197.60h-2.4zM1196.17 1143.07h2.4V1197.60h-2.4zM1199.49 1135.91h2.4V1197.60h-2.4zM1202.80 1147.84h2.4V1197.60h-2.4zM1206.12 1185.64h2.4V1197.60h-2.4zM1209.43 1142.10h2.4V1197.60h-2.4zM1212.75 1142.97h2.4V1197.60h-2.4zM1216.06 1145.58h2.4V1197.60h-2.4zM1219.38 1141.55h2.4V1197.60h-2.4zM1222.69 1149.18h2.4V1197.60h-2.4zM1226.01 1151.99h2.4V1197.60h-2.4zM1229.32 1177.00h2.4V1197.60h-2.4zM1232.64 1137.27h2.4V1197.60h-2.4zM1235.95 1148.75h2.4V1197.60h-2.4zM1239.27 1135.36h2.4V1197.60h-2.4zM1242.58 1131.32h2.4V1197.60h-2.4zM1245.90 1142.75h2.4V1197.60h-2.4zM1249.21 1145.25h2.4V1197.60h-2.4zM1252.53 1185.64h2.4V1197.60h-2.4zM1255.85 1131.62h2.4V1197.60h-2.4zM1259.16 1142.06h2.4V1197.60h-2.4zM1262.47 1146.66h2.4V1197.60h-2.4zM1265.79 1141.82h2.4V1197.60h-2.4zM1269.10 1144.02h2.4V1197.60h-2.4zM1272.42 1151.47h2.4V1197.60h-2.4zM1275.73 1174.34h2.4V1197.60h-2.4zM1279.05 1142.51h2.4V1197.60h-2.4zM1282.37 1137.04h2.4V1197.60h-2.4zM1285.68 1144.00h2.4V1197.60h-2.4zM1288.99 1148.18h2.4V1197.60h-2.4zM1292.31 1134.03h2.4V1197.60h-2.4zM1295.62 1148.88h2.4V1197.60h-2.4zM1298.94 1185.64h2.4V1197.60h-2.4zM1302.25 1135.34h2.4V1197.60h-2.4zM1305.57 1143.33h2.4V1197.60h-2.4zM1308.88 1140.32h2.4V1197.60h-2.4zM1312.20 1145.37h2.4V1197.60h-2.4zM1315.51 1144.60h2.4V1197.60h-2.4zM1318.83 1153.03h2.4V1197.60h-2.4zM1322.14 1176.34h2.4V1197.60h-2.4zM1325.46 1144.31h2.4V1197.60h-2.4zM1328.77 1138.04h2.4V1197.60h-2.4zM1332.09 1134.30h2.4V1197.60h-2.4zM1335.40 1144.32h2.4V1197.60h-2.4zM1338.72 1148.80h2.4V1197.60h-2.4zM1342.03 1151.47h2.4V1197.60h-2.4zM1345.35 1186.97h2.4V1197.60h-2.4zM1348.66 1142.34h2.4V1197.60h-2.4zM1351.98 1142.07h2.4V1197.60h-2.4zM1355.29 1139.91h2.4V1197.60h-2.4zM1358.61 1143.80h2.4V1197.60h-2.4zM1361.92 1137.72h2.4V1197.60h-2.4zM1365.24 1153.54h2.4V1197.60h-2.4zM1368.56 1177.00h2.4V1197.60h-2.4zM1371.87 1139.49h2.4V1197.60h-2.4zM1375.18 1140.55h2.4V1197.60h-2.4zM1378.50 1139.52h2.4V1197.60h-2.4zM1381.81 1139.91h2.4V1197.60h-2.4zM1385.13 1140.54h2.4V1197.60h-2.4zM1388.44 1147.84h2.4V1197.60h-2.4zM1391.76 1184.97h2.4V1197.60h-2.4zM1395.08 1138.07h2.4V1197.60h-2.4zM1398.39 1140.51h2.4V1197.60h-2.4zM1401.70 1140.00h2.4V1197.60h-2.4zM1405.02 1141.22h2.4V1197.60h-2.4zM1408.33 1141.21h2.4V1197.60h-2.4zM1411.65 1159.76h2.4V1197.60h-2.4zM1414.96 1177.00h2.4V1197.60h-2.4zM1418.28 1136.33h2.4V1197.60h-2.4zM1421.60 1140.01h2.4V1197.60h-2.4zM1424.91 1142.37h2.4V1197.60h-2.4zM1434.85 1162.87h2.4V1197.60h-2.4zM1438.17 1184.97h2.4V1197.60h-2.4zM1441.48 1136.38h2.4V1197.60h-2.4zM1444.80 1138.89h2.4V1197.60h-2.4zM1448.12 1134.40h2.4V1197.60h-2.4zM1451.43 1142.31h2.4V1197.60h-2.4zM1454.74 1139.87h2.4V1197.60h-2.4zM1458.06 1148.36h2.4V1197.60h-2.4zM1461.37 1178.33h2.4V1197.60h-2.4zM1464.69 1144.11h2.4V1197.60h-2.4zM1468.00 1138.55h2.4V1197.60h-2.4zM1471.32 1132.21h2.4V1197.60h-2.4zM1474.63 1135.83h2.4V1197.60h-2.4zM1477.95 1137.32h2.4V1197.60h-2.4zM1481.26 1150.95h2.4V1197.60h-2.4zM1484.58 1185.64h2.4V1197.60h-2.4zM1487.89 1144.16h2.4V1197.60h-2.4zM1491.21 1145.58h2.4V1197.60h-2.4zM1494.52 1136.50h2.4V1197.60h-2.4zM1497.84 1137.24h2.4V1197.60h-2.4zM1501.15 1137.11h2.4V1197.60h-2.4zM1504.47 1122.96h2.4V1197.60h-2.4zM1507.78 1178.33h2.4V1197.60h-2.4zM1511.10 1143.94h2.4V1197.60h-2.4zM1514.41 1138.59h2.4V1197.60h-2.4zM1517.73 1137.38h2.4V1197.60h-2.4zM1521.04 1137.77h2.4V1197.60h-2.4zM1524.36 1144.92h2.4V1197.60h-2.4zM1527.67 1164.95h2.4V1197.60h-2.4zM1537.62 1156.46h2.4V1197.60h-2.4zM1540.93 1143.05h2.4V1197.60h-2.4zM1544.25 1137.71h2.4V1197.60h-2.4zM1547.56 1139.16h2.4V1197.60h-2.4zM1550.88 1144.21h2.4V1197.60h-2.4zM1554.19 1187.63h2.4V1197.60h-2.4zM1560.83 1140.22h2.4V1197.60h-2.4zM1564.14 1142.06h2.4V1197.60h-2.4zM1567.45 1147.41h2.4V1197.60h-2.4zM1570.77 1140.44h2.4V1197.60h-2.4zM1574.08 1148.36h2.4V1197.60h-2.4zM1577.40 1185.64h2.4V1197.60h-2.4zM1580.71 1146.27h2.4V1197.60h-2.4zM1584.03 1156.48h2.4V1197.60h-2.4zM1587.35 1142.37h2.4V1197.60h-2.4zM1590.66 1131.71h2.4V1197.60h-2.4zM1593.97 1141.61h2.4V1197.60h-2.4zM1597.29 1143.70h2.4V1197.60h-2.4zM1600.60 1175.01h2.4V1197.60h-2.4zM1603.92 1140.21h2.4V1197.60h-2.4zM1607.23 1134.79h2.4V1197.60h-2.4zM1610.55 1138.07h2.4V1197.60h-2.4zM1613.87 1131.84h2.4V1197.60h-2.4zM1617.18 1132.15h2.4V1197.60h-2.4zM1620.49 1154.84h2.4V1197.60h-2.4zM1623.81 1178.99h2.4V1197.60h-2.4zM1627.12 1138.20h2.4V1197.60h-2.4zM1630.44 1137.55h2.4V1197.60h-2.4zM1633.75 1137.64h2.4V1197.60h-2.4zM1637.07 1138.61h2.4V1197.60h-2.4zM1640.38 1137.78h2.4V1197.60h-2.4zM1643.70 1137.99h2.4V1197.60h-2.4zM1647.01 1171.68h2.4V1197.60h-2.4zM1650.33 1150.04h2.4V1197.60h-2.4zM1653.64 1149.42h2.4V1197.60h-2.4zM1656.96 1141.94h2.4V1197.60h-2.4zM1660.27 1139.04h2.4V1197.60h-2.4zM1663.59 1140.65h2.4V1197.60h-2.4zM1666.90 1151.08h2.4V1197.60h-2.4zM1670.22 1186.97h2.4V1197.60h-2.4zM1673.53 1137.15h2.4V1197.60h-2.4zM1676.85 1144.47h2.4V1197.60h-2.4zM1680.16 1134.17h2.4V1197.60h-2.4zM1683.48 1134.62h2.4V1197.60h-2.4zM1686.79 1137.55h2.4V1197.60h-2.4zM1690.11 1130.74h2.4V1197.60h-2.4zM1693.42 1173.01h2.4V1197.60h-2.4zM1696.74 1133.11h2.4V1197.60h-2.4zM1700.06 1131.01h2.4V1197.60h-2.4zM1703.37 1143.06h2.4V1197.60h-2.4zM1706.68 1142.78h2.4V1197.60h-2.4zM1710.00 1139.11h2.4V1197.60h-2.4zM1713.31 1143.70h2.4V1197.60h-2.4zM1716.63 1188.30h2.4V1197.60h-2.4zM1719.94 1142.57h2.4V1197.60h-2.4zM1723.26 1139.90h2.4V1197.60h-2.4zM1726.58 1142.35h2.4V1197.60h-2.4zM1729.89 1143.35h2.4V1197.60h-2.4zM1733.20 1137.73h2.4V1197.60h-2.4zM1736.52 1155.64h2.4V1197.60h-2.4zM1739.83 1170.36h2.4V1197.60h-2.4zM1743.15 1143.21h2.4V1197.60h-2.4zM1746.46 1139.48h2.4V1197.60h-2.4zM1749.78 1136.07h2.4V1197.60h-2.4zM1753.10 1138.32h2.4V1197.60h-2.4zM1756.41 1131.36h2.4V1197.60h-2.4zM1759.72 1140.07h2.4V1197.60h-2.4zM1763.04 1185.64h2.4V1197.60h-2.4zM1766.35 1138.00h2.4V1197.60h-2.4zM1769.67 1140.33h2.4V1197.60h-2.4zM1772.98 1142.37h2.4V1197.60h-2.4zM1776.30 1140.94h2.4V1197.60h-2.4zM1779.62 1134.49h2.4V1197.60h-2.4zM1782.93 1146.10h2.4V1197.60h-2.4zM1786.24 1173.01h2.4V1197.60h-2.4zM1789.56 1128.58h2.4V1197.60h-2.4zM1792.87 1139.16h2.4V1197.60h-2.4zM1796.19 1141.49h2.4V1197.60h-2.4zM1799.50 1138.86h2.4V1197.60h-2.4zM1802.82 1134.99h2.4V1197.60h-2.4zM1806.13 1136.96h2.4V1197.60h-2.4zM1809.45 1187.63h2.4V1197.60h-2.4zM1812.76 1143.61h2.4V1197.60h-2.4zM1816.08 1145.14h2.4V1197.60h-2.4zM1819.39 1135.86h2.4V1197.60h-2.4zM1822.71 1134.33h2.4V1197.60h-2.4zM1826.02 1139.13h2.4V1197.60h-2.4zM1829.34 1145.25h2.4V1197.60h-2.4zM1832.65 1162.38h2.4V1197.60h-2.4zM1835.97 1131.19h2.4V1197.60h-2.4zM1839.28 1140.72h2.4V1197.60h-2.4zM1842.60 1137.72h2.4V1197.60h-2.4zM1845.91 1179.66h2.4V1197.60h-2.4zM1849.23 1177.27h2.4V1197.60h-2.4zM1852.54 1150.95h2.4V1197.60h-2.4zM1859.17 1128.90h2.4V1197.60h-2.4zM1862.49 1132.58h2.4V1197.60h-2.4zM1865.80 1136.87h2.4V1197.60h-2.4zM1869.12 1125.83h2.4V1197.60h-2.4zM1872.43 1138.23h2.4V1197.60h-2.4zM1875.75 1133.33h2.4V1197.60h-2.4zM1879.06 1160.39h2.4V1197.60h-2.4zM1882.38 1137.79h2.4V1197.60h-2.4zM1885.69 1140.71h2.4V1197.60h-2.4zM1889.01 1141.27h2.4V1197.60h-2.4zM1892.32 1134.45h2.4V1197.60h-2.4zM1895.64 1138.08h2.4V1197.60h-2.4zM1898.95 1158.21h2.4V1197.60h-2.4zM1902.27 1183.65h2.4V1197.60h-2.4zM1905.58 1139.97h2.4V1197.60h-2.4zM1908.90 1136.19h2.4V1197.60h-2.4zM1912.21 1137.90h2.4V1197.60h-2.4zM1915.53 1138.59h2.4V1197.60h-2.4zM1918.84 1143.13h2.4V1197.60h-2.4zM1922.16 1125.55h2.4V1197.60h-2.4zM1925.47 1174.34h2.4V1197.60h-2.4zM1928.79 1136.45h2.4V1197.60h-2.4zM1932.10 1131.99h2.4V1197.60h-2.4zM1935.42 1132.71h2.4V1197.60h-2.4zM1938.73 1137.58h2.4V1197.60h-2.4zM1942.05 1134.74h2.4V1197.60h-2.4zM1945.36 1135.92h2.4V1197.60h-2.4zM1948.68 1184.97h2.4V1197.60h-2.4zM1951.99 1140.89h2.4V1197.60h-2.4zM1955.31 1139.20h2.4V1197.60h-2.4zM1958.62 1139.02h2.4V1197.60h-2.4zM1961.94 1131.01h2.4V1197.60h-2.4zM1965.25 1137.28h2.4V1197.60h-2.4zM1968.57 1150.57h2.4V1197.60h-2.4zM1971.88 1177.00h2.4V1197.60h-2.4zM1975.20 1141.19h2.4V1197.60h-2.4zM1978.51 1131.74h2.4V1197.60h-2.4zM1981.83 1133.93h2.4V1197.60h-2.4zM1985.14 1144.06h2.4V1197.60h-2.4zM1988.46 1135.44h2.4V1197.60h-2.4zM1991.77 1129.70h2.4V1197.60h-2.4zM1995.09 1185.64h2.4V1197.60h-2.4zM1998.40 1139.07h2.4V1197.60h-2.4zM2001.72 1145.45h2.4V1197.60h-2.4zM2005.03 1142.24h2.4V1197.60h-2.4zM2008.35 1126.62h2.4V1197.60h-2.4zM2011.66 1134.57h2.4V1197.60h-2.4zM2014.98 1154.03h2.4V1197.60h-2.4zM2018.29 1171.02h2.4V1197.60h-2.4zM2021.61 1142.73h2.4V1197.60h-2.4zM2024.92 1128.49h2.4V1197.60h-2.4zM2028.24 1139.94h2.4V1197.60h-2.4zM2031.55 1136.03h2.4V1197.60h-2.4zM2034.87 1145.25h2.4V1197.60h-2.4zM2038.18 1143.70h2.4V1197.60h-2.4zM2041.50 1187.63h2.4V1197.60h-2.4zM2048.13 1141.93h2.4V1197.60h-2.4zM2051.45 1130.36h2.4V1197.60h-2.4zM2054.76 1137.67h2.4V1197.60h-2.4zM2058.07 1136.18h2.4V1197.60h-2.4zM2061.39 1132.81h2.4V1197.60h-2.4zM2064.70 1172.35h2.4V1197.60h-2.4zM2068.02 1141.01h2.4V1197.60h-2.4zM2071.34 1141.43h2.4V1197.60h-2.4zM2074.65 1135.66h2.4V1197.60h-2.4zM2077.97 1144.93h2.4V1197.60h-2.4zM2081.28 1138.04h2.4V1197.60h-2.4zM2084.60 1148.06h2.4V1197.60h-2.4zM2087.91 1185.64h2.4V1197.60h-2.4zM2091.23 1136.56h2.4V1197.60h-2.4zM2094.54 1136.25h2.4V1197.60h-2.4zM2097.86 1142.78h2.4V1197.60h-2.4zM2101.17 1130.97h2.4V1197.60h-2.4zM2104.49 1136.18h2.4V1197.60h-2.4zM2107.80 1134.88h2.4V1197.60h-2.4zM2111.11 1175.01h2.4V1197.60h-2.4zM2114.43 1131.49h2.4V1197.60h-2.4zM2117.74 1134.29h2.4V1197.60h-2.4zM2121.06 1136.60h2.4V1197.60h-2.4zM2124.38 1140.39h2.4V1197.60h-2.4zM2127.69 1141.34h2.4V1197.60h-2.4zM2131.01 1149.23h2.4V1197.60h-2.4zM2134.32 1184.31h2.4V1197.60h-2.4zM2137.64 1135.37h2.4V1197.60h-2.4zM2140.95 1137.20h2.4V1197.60h-2.4zM2144.27 1130.27h2.4V1197.60h-2.4zM2147.58 1147.27h2.4V1197.60h-2.4zM2150.90 1138.39h2.4V1197.60h-2.4zM2154.21 1127.11h2.4V1197.60h-2.4zM2157.53 1161.05h2.4V1197.60h-2.4zM2160.84 1139.87h2.4V1197.60h-2.4zM2164.16 1135.73h2.4V1197.60h-2.4zM2167.47 1138.12h2.4V1197.60h-2.4zM2174.10 1128.03h2.4V1197.60h-2.4zM2177.41 1147.32h2.4V1197.60h-2.4zM2180.73 1184.31h2.4V1197.60h-2.4zM2184.05 1128.79h2.4V1197.60h-2.4zM2187.36 1136.81h2.4V1197.60h-2.4zM2190.68 1147.18h2.4V1197.60h-2.4zM2193.99 1130.99h2.4V1197.60h-2.4zM2197.31 1128.33h2.4V1197.60h-2.4zM2200.62 1148.36h2.4V1197.60h-2.4zM2203.94 1175.67h2.4V1197.60h-2.4zM2207.25 1135.66h2.4V1197.60h-2.4zM2210.57 1126.05h2.4V1197.60h-2.4zM2213.88 1133.19h2.4V1197.60h-2.4zM2217.20 1135.45h2.4V1197.60h-2.4zM2220.51 1132.60h2.4V1197.60h-2.4zM2223.82 1139.55h2.4V1197.60h-2.4zM2227.14 1175.67h2.4V1197.60h-2.4zM2230.45 1135.81h2.4V1197.60h-2.4zM2233.77 1128.37h2.4V1197.60h-2.4zM2237.09 1137.31h2.4V1197.60h-2.4zM2240.40 1130.50h2.4V1197.60h-2.4zM2243.72 1136.14h2.4V1197.60h-2.4zM2247.03 1120.89h2.4V1197.60h-2.4zM2250.35 1175.67h2.4V1197.60h-2.4zM2253.66 1133.12h2.4V1197.60h-2.4zM2256.98 1130.60h2.4V1197.60h-2.4zM2260.29 1135.56h2.4V1197.60h-2.4zM2263.61 1136.14h2.4V1197.60h-2.4zM2266.92 1131.73h2.4V1197.60h-2.4zM2270.24 1137.99h2.4V1197.60h-2.4zM2273.55 1180.99h2.4V1197.60h-2.4zM2276.86 1130.63h2.4V1197.60h-2.4zM2280.18 1129.77h2.4V1197.60h-2.4zM2283.49 1138.09h2.4V1197.60h-2.4zM2286.81 1145.00h2.4V1197.60h-2.4zM2290.12 1144.84h2.4V1197.60h-2.4zM2293.44 1146.80h2.4V1197.60h-2.4zM2296.76 1178.99h2.4V1197.60h-2.4zM2300.07 1144.36h2.4V1197.60h-2.4zM2303.39 1127.01h2.4V1197.60h-2.4zM2306.70 1133.67h2.4V1197.60h-2.4zM2310.02 1135.08h2.4V1197.60h-2.4zM2313.33 1125.95h2.4V1197.60h-2.4zM2316.65 1125.04h2.4V1197.60h-2.4zM2319.96 1175.67h2.4V1197.60h-2.4zM2323.28 1135.42h2.4V1197.60h-2.4zM2326.59 1128.27h2.4V1197.60h-2.4z"/>
<path fill="#8fdbc3" d="M848.10 1075.81h2.4V1144.92h-2.4zM851.41 1087.17h2.4V1147.12h-2.4zM861.36 1064.36h2.4V1132.02h-2.4zM864.67 1068.94h2.4V1141.39h-2.4zM867.99 1076.67h2.4V1144.84h-2.4zM871.30 1080.54h2.4V1144.53h-2.4zM874.62 1084.79h2.4V1147.52h-2.4zM884.56 1071.35h2.4V1142.87h-2.4zM887.88 1076.07h2.4V1144.15h-2.4zM891.19 1069.79h2.4V1138.44h-2.4zM894.51 1079.88h2.4V1148.44h-2.4zM897.82 1088.93h2.4V1148.12h-2.4zM907.77 1075.88h2.4V1143.15h-2.4zM911.08 1078.09h2.4V1146.99h-2.4zM914.40 1078.81h2.4V1150.14h-2.4zM917.71 1073.68h2.4V1138.09h-2.4zM921.03 1066.59h2.4V1134.51h-2.4zM930.97 1086.69h2.4V1148.19h-2.4zM934.29 1079.91h2.4V1144.65h-2.4zM937.60 1072.32h2.4V1140.77h-2.4zM940.92 1083.30h2.4V1147.90h-2.4zM944.23 1085.26h2.4V1147.27h-2.4zM954.18 1082.21h2.4V1145.47h-2.4zM960.81 1090.63h2.4V1145.21h-2.4zM964.12 1071.47h2.4V1140.66h-2.4zM967.44 1078.13h2.4V1148.12h-2.4zM977.38 1075.45h2.4V1145.60h-2.4zM980.70 1067.97h2.4V1139.84h-2.4zM984.01 1072.01h2.4V1145.49h-2.4zM987.33 1082.96h2.4V1140.94h-2.4zM990.64 1072.53h2.4V1139.80h-2.4zM1000.59 1070.33h2.4V1144.35h-2.4zM1003.90 1085.17h2.4V1145.45h-2.4zM1007.22 1082.39h2.4V1149.49h-2.4zM1010.53 1073.32h2.4V1139.59h-2.4zM1013.85 1076.50h2.4V1145.82h-2.4zM1023.79 1083.64h2.4V1144.61h-2.4zM1027.11 1065.08h2.4V1134.63h-2.4zM1030.42 1075.22h2.4V1145.26h-2.4zM1033.74 1087.67h2.4V1146.74h-2.4zM1037.05 1083.63h2.4V1148.65h-2.4zM1047.00 1068.00h2.4V1136.29h-2.4zM1050.31 1088.38h2.4V1147.64h-2.4zM1053.63 1072.25h2.4V1141.24h-2.4zM1056.94 1077.13h2.4V1135.89h-2.4zM1060.26 1079.29h2.4V1145.32h-2.4zM1070.20 1067.27h2.4V1136.29h-2.4zM1073.52 1088.34h2.4V1140.99h-2.4zM1076.83 1075.66h2.4V1136.28h-2.4zM1080.15 1084.72h2.4V1147.50h-2.4zM1083.46 1073.09h2.4V1138.48h-2.4zM1093.41 1075.94h2.4V1135.20h-2.4zM1096.72 1064.60h2.4V1137.96h-2.4zM1100.04 1072.87h2.4V1138.84h-2.4zM1103.35 1074.84h2.4V1141.65h-2.4zM1106.67 1073.15h2.4V1141.85h-2.4zM1116.62 1086.17h2.4V1142.90h-2.4zM1119.93 1086.86h2.4V1146.10h-2.4zM1123.24 1077.77h2.4V1142.61h-2.4zM1126.56 1086.44h2.4V1145.61h-2.4zM1129.87 1079.87h2.4V1148.08h-2.4zM1139.82 1076.77h2.4V1143.15h-2.4zM1143.13 1075.20h2.4V1143.14h-2.4zM1146.45 1092.41h2.4V1151.78h-2.4zM1149.76 1066.28h2.4V1134.26h-2.4zM1153.08 1075.47h2.4V1141.57h-2.4zM1166.34 1084.29h2.4V1143.61h-2.4zM1169.65 1066.71h2.4V1136.40h-2.4zM1172.97 1073.08h2.4V1141.06h-2.4zM1176.28 1081.86h2.4V1142.63h-2.4zM1186.23 1077.65h2.4V1145.04h-2.4zM1189.54 1077.06h2.4V1143.38h-2.4zM1192.86 1076.93h2.4V1140.80h-2.4zM1196.17 1081.61h2.4V1143.07h-2.4zM1199.49 1069.08h2.4V1135.91h-2.4zM1209.43 1073.82h2.4V1142.10h-2.4zM1212.75 1069.15h2.4V1142.97h-2.4zM1216.06 1080.81h2.4V1145.58h-2.4zM1219.38 1083.36h2.4V1141.55h-2.4zM1222.69 1086.02h2.4V1149.18h-2.4zM1232.64 1074.39h2.4V1137.27h-2.4zM1235.95 1081.23h2.4V1148.75h-2.4zM1239.27 1065.81h2.4V1135.36h-2.4zM1242.58 1056.65h2.4V1131.32h-2.4zM1245.90 1078.20h2.4V1142.75h-2.4zM1255.85 1065.84h2.4V1131.62h-2.4zM1259.16 1078.35h2.4V1142.06h-2.4zM1262.47 1082.16h2.4V1146.66h-2.4zM1265.79 1074.95h2.4V1141.82h-2.4zM1269.10 1088.12h2.4V1144.02h-2.4zM1279.05 1077.33h2.4V1142.51h-2.4zM1282.37 1078.45h2.4V1137.04h-2.4zM1285.68 1080.04h2.4V1144.00h-2.4zM1288.99 1080.85h2.4V1148.18h-2.4zM1292.31 1071.30h2.4V1134.03h-2.4zM1302.25 1069.34h2.4V1135.34h-2.4zM1305.57 1075.02h2.4V1143.33h-2.4zM1308.88 1075.34h2.4V1140.32h-2.4zM1312.20 1082.68h2.4V1145.37h-2.4zM1315.51 1077.61h2.4V1144.60h-2.4zM1325.46 1077.90h2.4V1144.31h-2.4zM1328.77 1066.81h2.4V1138.04h-2.4zM1332.09 1073.49h2.4V1134.30h-2.4zM1335.40 1088.30h2.4V1144.32h-2.4zM1338.72 1091.35h2.4V1148.80h-2.4zM1348.66 1075.25h2.4V1142.34h-2.4zM1351.98 1073.90h2.4V1142.07h-2.4zM1355.29 1071.44h2.4V1139.91h-2.4zM1358.61 1074.18h2.4V1143.80h-2.4zM1361.92 1072.13h2.4V1137.72h-2.4zM1371.87 1074.83h2.4V1139.49h-2.4zM1375.18 1068.88h2.4V1140.55h-2.4zM1378.50 1070.01h2.4V1139.52h-2.4zM1381.81 1074.83h2.4V1139.91h-2.4zM1385.13 1072.92h2.4V1140.54h-2.4zM1395.08 1073.63h2.4V1138.07h-2.4zM1398.39 1083.42h2.4V1140.51h-2.4zM1401.70 1076.78h2.4V1140.00h-2.4zM1405.02 1073.36h2.4V1141.22h-2.4zM1408.33 1078.96h2.4V1141.21h-2.4zM1418.28 1065.99h2.4V1136.33h-2.4zM1421.60 1083.83h2.4V1140.01h-2.4zM1424.91 1092.87h2.4V1142.37h-2.4zM1441.48 1073.83h2.4V1136.38h-2.4zM1444.80 1077.95h2.4V1138.89h-2.4zM1448.12 1066.59h2.4V1134.40h-2.4zM1451.43 1082.12h2.4V1142.31h-2.4zM1454.74 1076.59h2.4V1139.87h-2.4zM1464.69 1079.57h2.4V1144.11h-2.4zM1468.00 1066.64h2.4V1138.55h-2.4zM1471.32 1068.56h2.4V1132.21h-2.4zM1474.63 1061.73h2.4V1135.83h-2.4zM1477.95 1077.16h2.4V1137.32h-2.4zM1487.89 1079.68h2.4V1144.16h-2.4zM1491.21 1086.21h2.4V1145.58h-2.4zM1494.52 1072.27h2.4V1136.50h-2.4zM1497.84 1066.42h2.4V1137.24h-2.4zM1501.15 1073.78h2.4V1137.11h-2.4zM1511.10 1083.06h2.4V1143.94h-2.4zM1514.41 1080.40h2.4V1138.59h-2.4zM1517.73 1070.06h2.4V1137.38h-2.4zM1521.04 1071.22h2.4V1137.77h-2.4zM1524.36 1086.63h2.4V1144.92h-2.4zM1537.62 1098.21h2.4V1156.46h-2.4zM1540.93 1086.18h2.4V1143.05h-2.4zM1544.25 1076.32h2.4V1137.71h-2.4zM1547.56 1082.77h2.4V1139.16h-2.4zM1560.83 1075.07h2.4V1140.22h-2.4zM1564.14 1078.49h2.4V1142.06h-2.4zM1567.45 1088.50h2.4V1147.41h-2.4zM1570.77 1082.91h2.4V1140.44h-2.4zM1580.71 1077.32h2.4V1146.27h-2.4zM1584.03 1112.01h2.4V1156.48h-2.4zM1587.35 1074.00h2.4V1142.37h-2.4zM1590.66 1059.23h2.4V1131.71h-2.4zM1593.97 1077.50h2.4V1141.61h-2.4zM1603.92 1081.49h2.4V1140.21h-2.4zM1607.23 1070.00h2.4V1134.79h-2.4zM1610.55 1075.51h2.4V1138.07h-2.4zM1613.87 1060.88h2.4V1131.84h-2.4zM1617.18 1067.02h2.4V1132.15h-2.4zM1627.12 1083.05h2.4V1138.20h-2.4zM1630.44 1076.10h2.4V1137.55h-2.4zM1633.75 1072.60h2.4V1137.64h-2.4zM1637.07 1085.72h2.4V1138.61h-2.4zM1640.38 1064.80h2.4V1137.78h-2.4zM1650.33 1086.81h2.4V1150.04h-2.4zM1653.64 1086.15h2.4V1149.42h-2.4zM1656.96 1077.86h2.4V1141.94h-2.4zM1660.27 1078.03h2.4V1139.04h-2.4zM1663.59 1077.90h2.4V1140.65h-2.4zM1673.53 1065.35h2.4V1137.15h-2.4zM1676.85 1076.51h2.4V1144.47h-2.4zM1680.16 1073.22h2.4V1134.17h-2.4zM1683.48 1068.77h2.4V1134.62h-2.4zM1686.79 1075.08h2.4V1137.55h-2.4zM1696.74 1060.87h2.4V1133.11h-2.4zM1700.06 1059.74h2.4V1131.01h-2.4zM1703.37 1083.70h2.4V1143.06h-2.4zM1706.68 1078.41h2.4V1142.78h-2.4zM1710.00 1069.88h2.4V1139.11h-2.4zM1719.94 1078.17h2.4V1142.57h-2.4zM1723.26 1078.42h2.4V1139.90h-2.4zM1726.58 1079.55h2.4V1142.35h-2.4zM1729.89 1084.73h2.4V1143.35h-2.4zM1733.20 1076.96h2.4V1137.73h-2.4zM1743.15 1075.24h2.4V1143.21h-2.4zM1746.46 1078.45h2.4V1139.48h-2.4zM1749.78 1071.39h2.4V1136.07h-2.4zM1753.10 1069.44h2.4V1138.32h-2.4zM1756.41 1058.12h2.4V1131.36h-2.4zM1766.35 1074.07h2.4V1138.00h-2.4zM1769.67 1071.92h2.4V1140.33h-2.4zM1772.98 1079.95h2.4V1142.37h-2.4zM1776.30 1083.78h2.4V1140.94h-2.4zM1779.62 1066.72h2.4V1134.49h-2.4zM1789.56 1059.95h2.4V1128.58h-2.4zM1792.87 1080.22h2.4V1139.16h-2.4zM1796.19 1076.32h2.4V1141.49h-2.4zM1799.50 1068.18h2.4V1138.86h-2.4zM1802.82 1071.59h2.4V1134.99h-2.4zM1812.76 1082.37h2.4V1143.61h-2.4zM1816.08 1083.28h2.4V1145.14h-2.4zM1819.39 1073.37h2.4V1135.86h-2.4zM1822.71 1065.52h2.4V1134.33h-2.4zM1826.02 1070.76h2.4V1139.13h-2.4zM1835.97 1067.63h2.4V1131.19h-2.4zM1839.28 1073.24h2.4V1140.72h-2.4zM1842.60 1073.31h2.4V1137.72h-2.4zM1859.17 1049.40h2.4V1128.90h-2.4zM1862.49 1059.41h2.4V1132.58h-2.4zM1865.80 1067.64h2.4V1136.87h-2.4zM1869.12 1056.60h2.4V1125.83h-2.4zM1872.43 1066.60h2.4V1138.23h-2.4zM1882.38 1079.90h2.4V1137.79h-2.4zM1885.69 1083.60h2.4V1140.71h-2.4zM1889.01 1077.58h2.4V1141.27h-2.4zM1892.32 1072.07h2.4V1134.45h-2.4zM1895.64 1067.98h2.4V1138.08h-2.4zM1905.58 1066.21h2.4V1139.97h-2.4zM1908.90 1063.71h2.4V1136.19h-2.4zM1912.21 1074.24h2.4V1137.90h-2.4zM1915.53 1076.12h2.4V1138.59h-2.4zM1918.84 1075.58h2.4V1143.13h-2.4zM1928.79 1062.90h2.4V1136.45h-2.4zM1932.10 1058.56h2.4V1131.99h-2.4zM1935.42 1072.00h2.4V1132.71h-2.4zM1938.73 1072.57h2.4V1137.58h-2.4zM1942.05 1066.39h2.4V1134.74h-2.4zM1951.99 1068.04h2.4V1140.89h-2.4zM1955.31 1075.58h2.4V1139.20h-2.4zM1958.62 1067.75h2.4V1139.02h-2.4zM1961.94 1060.47h2.4V1131.01h-2.4zM1965.25 1061.26h2.4V1137.28h-2.4zM1975.20 1067.63h2.4V1141.19h-2.4zM1978.51 1066.93h2.4V1131.74h-2.4zM1981.83 1063.26h2.4V1133.93h-2.4zM1985.14 1083.38h2.4V1144.06h-2.4zM1988.46 1066.34h2.4V1135.44h-2.4zM1998.40 1059.75h2.4V1139.07h-2.4zM2001.72 1083.30h2.4V1145.45h-2.4zM2005.03 1080.29h2.4V1142.24h-2.4zM2008.35 1051.69h2.4V1126.62h-2.4zM2011.66 1068.07h2.4V1134.57h-2.4zM2021.61 1074.88h2.4V1142.73h-2.4zM2024.92 1053.78h2.4V1128.49h-2.4zM2028.24 1075.82h2.4V1139.94h-2.4zM2031.55 1066.46h2.4V1136.03h-2.4zM2034.87 1076.53h2.4V1145.25h-2.4zM2048.13 1065.51h2.4V1141.93h-2.4zM2051.45 1064.68h2.4V1130.36h-2.4zM2054.76 1068.17h2.4V1137.67h-2.4zM2058.07 1064.05h2.4V1136.18h-2.4zM2068.02 1068.68h2.4V1141.01h-2.4zM2071.34 1077.21h2.4V1141.43h-2.4zM2074.65 1067.63h2.4V1135.66h-2.4zM2077.97 1074.69h2.4V1144.93h-2.4zM2081.28 1071.81h2.4V1138.04h-2.4zM2091.23 1072.31h2.4V1136.56h-2.4zM2094.54 1067.09h2.4V1136.25h-2.4zM2097.86 1076.37h2.4V1142.78h-2.4zM2101.17 1056.74h2.4V1130.97h-2.4zM2104.49 1065.10h2.4V1136.18h-2.4zM2114.43 1060.96h2.4V1131.49h-2.4zM2117.74 1059.77h2.4V1134.29h-2.4zM2121.06 1073.63h2.4V1136.60h-2.4zM2124.38 1072.53h2.4V1140.39h-2.4zM2127.69 1078.39h2.4V1141.34h-2.4zM2137.64 1067.95h2.4V1135.37h-2.4zM2140.95 1069.59h2.4V1137.20h-2.4zM2144.27 1065.79h2.4V1130.27h-2.4zM2147.58 1085.14h2.4V1147.27h-2.4zM2150.90 1083.98h2.4V1138.39h-2.4zM2160.84 1075.41h2.4V1139.87h-2.4zM2164.16 1069.28h2.4V1135.73h-2.4zM2167.47 1062.81h2.4V1138.12h-2.4zM2174.10 1062.27h2.4V1128.03h-2.4zM2184.05 1063.75h2.4V1128.79h-2.4zM2187.36 1061.20h2.4V1136.81h-2.4zM2190.68 1076.27h2.4V1147.18h-2.4zM2193.99 1058.95h2.4V1130.99h-2.4zM2197.31 1064.87h2.4V1128.33h-2.4zM2207.25 1058.84h2.4V1135.66h-2.4zM2210.57 1039.19h2.4V1126.05h-2.4zM2213.88 1060.37h2.4V1133.19h-2.4zM2217.20 1061.71h2.4V1135.45h-2.4zM2220.51 1060.74h2.4V1132.60h-2.4zM2230.45 1067.97h2.4V1135.81h-2.4zM2233.77 1061.19h2.4V1128.37h-2.4zM2237.09 1062.53h2.4V1137.31h-2.4zM2240.40 1066.41h2.4V1130.50h-2.4zM2243.72 1064.32h2.4V1136.14h-2.4zM2253.66 1058.50h2.4V1133.12h-2.4zM2256.98 1065.51h2.4V1130.60h-2.4zM2260.29 1056.92h2.4V1135.56h-2.4zM2263.61 1060.14h2.4V1136.14h-2.4zM2266.92 1065.85h2.4V1131.73h-2.4zM2276.86 1055.28h2.4V1130.63h-2.4zM2280.18 1044.12h2.4V1129.77h-2.4zM2283.49 1066.41h2.4V1138.09h-2.4zM2286.81 1082.34h2.4V1145.00h-2.4zM2290.12 1093.56h2.4V1144.84h-2.4zM2300.07 1070.71h2.4V1144.36h-2.4zM2303.39 1061.13h2.4V1127.01h-2.4zM2306.70 1052.79h2.4V1133.67h-2.4zM2310.02 1055.66h2.4V1135.08h-2.4zM2313.33 1040.32h2.4V1125.95h-2.4zM2323.28 1057.05h2.4V1135.42h-2.4zM2326.59 1049.10h2.4V1128.27h-2.4z"/>
<path fill="#9b63a0" d="M848.10 1006.28h2.4V1075.81h-2.4zM851.41 1021.04h2.4V1087.17h-2.4zM854.73 1152.15h2.4V1160.28h-2.4zM861.36 992.94h2.4V1064.36h-2.4zM864.67 998.16h2.4V1068.94h-2.4zM867.99 1012.87h2.4V1076.67h-2.4zM871.30 1015.90h2.4V1080.54h-2.4zM874.62 1026.91h2.4V1084.79h-2.4zM877.93 1144.57h2.4V1154.06h-2.4zM884.56 998.29h2.4V1071.35h-2.4zM887.88 1008.73h2.4V1076.07h-2.4zM891.19 995.20h2.4V1069.79h-2.4zM894.51 1000.98h2.4V1079.88h-2.4zM897.82 1016.01h2.4V1088.93h-2.4zM901.14 1137.63h2.4V1148.36h-2.4zM907.77 1004.18h2.4V1075.88h-2.4zM911.08 996.87h2.4V1078.09h-2.4zM914.40 1007.95h2.4V1078.81h-2.4zM917.71 1003.87h2.4V1073.68h-2.4zM921.03 999.17h2.4V1066.59h-2.4zM924.34 1143.94h2.4V1153.54h-2.4zM930.97 1014.27h2.4V1086.69h-2.4zM934.29 1008.90h2.4V1079.91h-2.4zM937.60 992.23h2.4V1072.32h-2.4zM940.92 1020.11h2.4V1083.30h-2.4zM944.23 1019.83h2.4V1085.26h-2.4zM947.55 1144.57h2.4V1154.06h-2.4zM954.18 1012.43h2.4V1082.21h-2.4zM960.81 1027.44h2.4V1090.63h-2.4zM964.12 992.45h2.4V1071.47h-2.4zM967.44 1014.21h2.4V1078.13h-2.4zM970.75 1140.15h2.4V1150.43h-2.4zM977.38 1002.73h2.4V1075.45h-2.4zM980.70 988.04h2.4V1067.97h-2.4zM984.01 1001.72h2.4V1072.01h-2.4zM987.33 1016.54h2.4V1082.96h-2.4zM990.64 1006.02h2.4V1072.53h-2.4zM993.96 1144.57h2.4V1154.06h-2.4zM1000.59 1003.69h2.4V1070.33h-2.4zM1003.90 1012.17h2.4V1085.17h-2.4zM1007.22 1018.06h2.4V1082.39h-2.4zM1010.53 996.10h2.4V1073.32h-2.4zM1013.85 1015.68h2.4V1076.50h-2.4zM1017.16 1137.63h2.4V1148.36h-2.4zM1023.79 1014.26h2.4V1083.64h-2.4zM1027.11 996.06h2.4V1065.08h-2.4zM1030.42 1001.08h2.4V1075.22h-2.4zM1033.74 1019.62h2.4V1087.67h-2.4zM1037.05 1019.01h2.4V1083.63h-2.4zM1040.37 1141.42h2.4V1151.47h-2.4zM1047.00 1004.82h2.4V1068.00h-2.4zM1050.31 1026.10h2.4V1088.38h-2.4zM1053.63 1005.68h2.4V1072.25h-2.4zM1056.94 1006.26h2.4V1077.13h-2.4zM1060.26 1006.33h2.4V1079.29h-2.4zM1063.57 1141.42h2.4V1151.47h-2.4zM1070.20 997.86h2.4V1067.27h-2.4zM1073.52 1016.04h2.4V1088.34h-2.4zM1076.83 994.58h2.4V1075.66h-2.4zM1080.15 1012.30h2.4V1084.72h-2.4zM1083.46 1012.85h2.4V1073.09h-2.4zM1086.78 1148.36h2.4V1157.17h-2.4zM1093.41 1004.57h2.4V1075.94h-2.4zM1096.72 985.88h2.4V1064.60h-2.4zM1100.04 1006.01h2.4V1072.87h-2.4zM1103.35 1004.25h2.4V1074.84h-2.4zM1106.67 1006.07h2.4V1073.15h-2.4zM1109.98 1140.15h2.4V1150.43h-2.4zM1116.62 1012.73h2.4V1086.17h-2.4zM1119.93 1017.02h2.4V1086.86h-2.4zM1123.24 1017.31h2.4V1077.77h-2.4zM1126.56 1021.10h2.4V1086.44h-2.4zM1129.87 1018.90h2.4V1079.87h-2.4zM1133.19 1135.74h2.4V1146.81h-2.4zM1139.82 1008.52h2.4V1076.77h-2.4zM1143.13 1010.17h2.4V1075.20h-2.4zM1146.45 1022.18h2.4V1092.41h-2.4zM1149.76 989.73h2.4V1066.28h-2.4zM1153.08 1017.15h2.4V1075.47h-2.4zM1156.39 1159.09h2.4V1165.98h-2.4zM1166.34 1012.76h2.4V1084.29h-2.4zM1169.65 1003.19h2.4V1066.71h-2.4zM1172.97 1009.65h2.4V1073.08h-2.4zM1176.28 1008.75h2.4V1081.86h-2.4zM1179.60 1145.20h2.4V1154.58h-2.4zM1186.23 994.67h2.4V1077.65h-2.4zM1189.54 1004.22h2.4V1077.06h-2.4zM1192.86 1012.33h2.4V1076.93h-2.4zM1196.17 1011.88h2.4V1081.61h-2.4zM1199.49 991.38h2.4V1069.08h-2.4zM1202.80 1137.00h2.4V1147.84h-2.4zM1209.43 1001.95h2.4V1073.82h-2.4zM1212.75 1000.19h2.4V1069.15h-2.4zM1216.06 1015.46h2.4V1080.81h-2.4zM1219.38 1008.11h2.4V1083.36h-2.4zM1222.69 1026.48h2.4V1086.02h-2.4zM1226.01 1142.05h2.4V1151.99h-2.4zM1232.64 998.32h2.4V1074.39h-2.4zM1235.95 1017.71h2.4V1081.23h-2.4zM1239.27 1002.43h2.4V1065.81h-2.4zM1242.58 974.04h2.4V1056.65h-2.4zM1245.90 1006.97h2.4V1078.20h-2.4zM1249.21 1133.84h2.4V1145.25h-2.4zM1255.85 995.19h2.4V1065.84h-2.4zM1259.16 1001.57h2.4V1078.35h-2.4zM1262.47 1008.12h2.4V1082.16h-2.4zM1265.79 1014.77h2.4V1074.95h-2.4zM1269.10 1021.24h2.4V1088.12h-2.4zM1272.42 1141.42h2.4V1151.47h-2.4zM1279.05 1010.74h2.4V1077.33h-2.4zM1282.37 1011.04h2.4V1078.45h-2.4zM1285.68 1009.98h2.4V1080.04h-2.4zM1288.99 1011.40h2.4V1080.85h-2.4zM1292.31 1004.83h2.4V1071.30h-2.4zM1295.62 1138.26h2.4V1148.88h-2.4zM1302.25 997.78h2.4V1069.34h-2.4zM1305.57 1000.34h2.4V1075.02h-2.4zM1308.88 1005.42h2.4V1075.34h-2.4zM1312.20 1010.64h2.4V1082.68h-2.4zM1315.51 1007.64h2.4V1077.61h-2.4zM1318.83 1143.31h2.4V1153.03h-2.4zM1325.46 1010.55h2.4V1077.90h-2.4zM1328.77 993.79h2.4V1066.81h-2.4zM1332.09 991.67h2.4V1073.49h-2.4zM1335.40 1013.05h2.4V1088.30h-2.4zM1338.72 1030.52h2.4V1091.35h-2.4zM1342.03 1141.42h2.4V1151.47h-2.4zM1348.66 1011.11h2.4V1075.25h-2.4zM1351.98 1001.87h2.4V1073.90h-2.4zM1355.29 1000.12h2.4V1071.44h-2.4zM1358.61 1001.10h2.4V1074.18h-2.4zM1361.92 1006.94h2.4V1072.13h-2.4zM1365.24 1143.94h2.4V1153.54h-2.4zM1371.87 1013.94h2.4V1074.83h-2.4zM1375.18 999.19h2.4V1068.88h-2.4zM1378.50 994.64h2.4V1070.01h-2.4zM1381.81 997.19h2.4V1074.83h-2.4zM1385.13 1008.57h2.4V1072.92h-2.4zM1388.44 1137.00h2.4V1147.84h-2.4zM1395.08 997.34h2.4V1073.63h-2.4zM1398.39 1001.68h2.4V1083.42h-2.4zM1401.70 1011.03h2.4V1076.78h-2.4zM1405.02 1008.10h2.4V1073.36h-2.4zM1408.33 1007.27h2.4V1078.96h-2.4zM1411.65 1151.52h2.4V1159.76h-2.4zM1418.28 999.34h2.4V1065.99h-2.4zM1421.60 1012.44h2.4V1083.83h-2.4zM1424.91 1025.83h2.4V1092.87h-2.4zM1434.85 1155.30h2.4V1162.87h-2.4zM1441.48 998.23h2.4V1073.83h-2.4zM1444.80 1007.99h2.4V1077.95h-2.4zM1448.12 983.33h2.4V1066.59h-2.4zM1451.43 1016.20h2.4V1082.12h-2.4zM1454.74 1011.51h2.4V1076.59h-2.4zM1458.06 1137.63h2.4V1148.36h-2.4zM1464.69 1013.66h2.4V1079.57h-2.4zM1468.00 1009.23h2.4V1066.64h-2.4zM1471.32 1005.69h2.4V1068.56h-2.4zM1474.63 984.63h2.4V1061.73h-2.4zM1477.95 1001.15h2.4V1077.16h-2.4zM1481.26 1140.79h2.4V1150.95h-2.4zM1487.89 1023.09h2.4V1079.68h-2.4zM1491.21 1015.39h2.4V1086.21h-2.4zM1494.52 996.30h2.4V1072.27h-2.4zM1497.84 982.25h2.4V1066.42h-2.4zM1501.15 1011.43h2.4V1073.78h-2.4zM1504.47 1106.70h2.4V1122.96h-2.4zM1511.10 1013.57h2.4V1083.06h-2.4zM1514.41 1007.87h2.4V1080.40h-2.4zM1517.73 1003.86h2.4V1070.06h-2.4zM1521.04 995.24h2.4V1071.22h-2.4zM1524.36 1020.02h2.4V1086.63h-2.4zM1527.67 1157.83h2.4V1164.95h-2.4zM1537.62 1033.83h2.4V1098.21h-2.4zM1540.93 1013.34h2.4V1086.18h-2.4zM1544.25 1008.94h2.4V1076.32h-2.4zM1547.56 1009.09h2.4V1082.77h-2.4zM1550.88 1132.58h2.4V1144.21h-2.4zM1560.83 1000.92h2.4V1075.07h-2.4zM1564.14 1009.05h2.4V1078.49h-2.4zM1567.45 1017.52h2.4V1088.50h-2.4zM1570.77 1001.75h2.4V1082.91h-2.4zM1574.08 1137.63h2.4V1148.36h-2.4zM1580.71 1004.54h2.4V1077.32h-2.4zM1584.03 1057.43h2.4V1112.01h-2.4zM1587.35 996.23h2.4V1074.00h-2.4zM1590.66 978.09h2.4V1059.23h-2.4zM1593.97 998.39h2.4V1077.50h-2.4zM1597.29 1131.95h2.4V1143.70h-2.4zM1603.92 1015.41h2.4V1081.49h-2.4zM1607.23 996.96h2.4V1070.00h-2.4zM1610.55 998.44h2.4V1075.51h-2.4zM1613.87 980.47h2.4V1060.88h-2.4zM1617.18 991.23h2.4V1067.02h-2.4zM1620.49 1145.52h2.4V1154.84h-2.4zM1627.12 1014.35h2.4V1083.05h-2.4zM1630.44 1000.74h2.4V1076.10h-2.4zM1633.75 1005.79h2.4V1072.60h-2.4zM1637.07 1013.66h2.4V1085.72h-2.4zM1640.38 987.11h2.4V1064.80h-2.4zM1643.70 1125.00h2.4V1137.99h-2.4zM1650.33 1023.67h2.4V1086.81h-2.4zM1653.64 1019.08h2.4V1086.15h-2.4zM1656.96 1009.49h2.4V1077.86h-2.4zM1660.27 1003.63h2.4V1078.03h-2.4zM1663.59 998.82h2.4V1077.90h-2.4zM1666.90 1140.94h2.4V1151.08h-2.4zM1673.53 995.72h2.4V1065.35h-2.4zM1676.85 1001.01h2.4V1076.51h-2.4zM1680.16 991.91h2.4V1073.22h-2.4zM1683.48 989.24h2.4V1068.77h-2.4zM1686.79 1003.51h2.4V1075.08h-2.4zM1690.11 1116.17h2.4V1130.74h-2.4zM1696.74 982.98h2.4V1060.87h-2.4zM1700.06 979.77h2.4V1059.74h-2.4zM1703.37 1020.19h2.4V1083.70h-2.4zM1706.68 1001.63h2.4V1078.41h-2.4zM1710.00 999.43h2.4V1069.88h-2.4zM1713.31 1131.95h2.4V1143.70h-2.4zM1719.94 995.23h2.4V1078.17h-2.4zM1723.26 1009.37h2.4V1078.42h-2.4zM1726.58 1011.31h2.4V1079.55h-2.4zM1729.89 1013.90h2.4V1084.73h-2.4zM1733.20 993.37h2.4V1076.96h-2.4zM1736.52 1146.50h2.4V1155.64h-2.4zM1743.15 1001.50h2.4V1075.24h-2.4zM1746.46 1005.60h2.4V1078.45h-2.4zM1749.78 1006.48h2.4V1071.39h-2.4zM1753.10 991.86h2.4V1069.44h-2.4zM1756.41 983.21h2.4V1058.12h-2.4zM1759.72 1127.53h2.4V1140.07h-2.4zM1766.35 1009.88h2.4V1074.07h-2.4zM1769.67 993.18h2.4V1071.92h-2.4zM1772.98 1000.67h2.4V1079.95h-2.4zM1776.30 1009.38h2.4V1083.78h-2.4zM1779.62 991.49h2.4V1066.72h-2.4zM1782.93 1134.87h2.4V1146.10h-2.4zM1789.56 976.62h2.4V1059.95h-2.4zM1792.87 1007.81h2.4V1080.22h-2.4zM1796.19 995.13h2.4V1076.32h-2.4zM1799.50 990.35h2.4V1068.18h-2.4zM1802.82 988.74h2.4V1071.59h-2.4zM1806.13 1123.74h2.4V1136.96h-2.4zM1812.76 1007.71h2.4V1082.37h-2.4zM1816.08 1010.57h2.4V1083.28h-2.4zM1819.39 1000.65h2.4V1073.37h-2.4zM1822.71 997.22h2.4V1065.52h-2.4zM1826.02 995.14h2.4V1070.76h-2.4zM1829.34 1133.84h2.4V1145.25h-2.4zM1835.97 993.10h2.4V1067.63h-2.4zM1839.28 1008.49h2.4V1073.24h-2.4zM1842.60 989.40h2.4V1073.31h-2.4zM1845.91 1178.26h2.4V1179.66h-2.4zM1849.23 1175.68h2.4V1177.27h-2.4zM1852.54 1140.79h2.4V1150.95h-2.4zM1859.17 973.61h2.4V1049.40h-2.4zM1862.49 970.85h2.4V1059.41h-2.4zM1865.80 993.09h2.4V1067.64h-2.4zM1869.12 982.42h2.4V1056.60h-2.4zM1872.43 984.01h2.4V1066.60h-2.4zM1875.75 1119.32h2.4V1133.33h-2.4zM1882.38 991.37h2.4V1079.90h-2.4zM1885.69 1014.65h2.4V1083.60h-2.4zM1889.01 998.61h2.4V1077.58h-2.4zM1892.32 998.13h2.4V1072.07h-2.4zM1895.64 978.51h2.4V1067.98h-2.4zM1898.95 1149.62h2.4V1158.21h-2.4zM1905.58 989.74h2.4V1066.21h-2.4zM1908.90 988.90h2.4V1063.71h-2.4zM1912.21 999.08h2.4V1074.24h-2.4zM1915.53 997.51h2.4V1076.12h-2.4zM1918.84 998.03h2.4V1075.58h-2.4zM1922.16 1109.85h2.4V1125.55h-2.4zM1928.79 990.69h2.4V1062.90h-2.4zM1932.10 982.72h2.4V1058.56h-2.4zM1935.42 997.25h2.4V1072.00h-2.4zM1938.73 993.24h2.4V1072.57h-2.4zM1942.05 987.21h2.4V1066.39h-2.4zM1945.36 1122.48h2.4V1135.92h-2.4zM1951.99 989.23h2.4V1068.04h-2.4zM1955.31 1007.93h2.4V1075.58h-2.4zM1958.62 991.88h2.4V1067.75h-2.4zM1961.94 974.80h2.4V1060.47h-2.4zM1965.25 969.96h2.4V1061.26h-2.4zM1968.57 1140.32h2.4V1150.57h-2.4zM1975.20 979.78h2.4V1067.63h-2.4zM1978.51 998.80h2.4V1066.93h-2.4zM1981.83 989.75h2.4V1063.26h-2.4zM1985.14 1004.89h2.4V1083.38h-2.4zM1988.46 1001.10h2.4V1066.34h-2.4zM1991.77 1114.90h2.4V1129.70h-2.4zM1998.40 983.45h2.4V1059.75h-2.4zM2001.72 1005.98h2.4V1083.30h-2.4zM2005.03 1004.76h2.4V1080.29h-2.4zM2008.35 970.33h2.4V1051.69h-2.4zM2011.66 982.72h2.4V1068.07h-2.4zM2014.98 1144.53h2.4V1154.03h-2.4zM2021.61 999.73h2.4V1074.88h-2.4zM2024.92 972.32h2.4V1053.78h-2.4zM2028.24 986.88h2.4V1075.82h-2.4zM2031.55 983.88h2.4V1066.46h-2.4zM2034.87 996.33h2.4V1076.53h-2.4zM2038.18 1131.95h2.4V1143.70h-2.4zM2048.13 980.17h2.4V1065.51h-2.4zM2051.45 982.68h2.4V1064.68h-2.4zM2054.76 973.42h2.4V1068.17h-2.4zM2058.07 977.32h2.4V1064.05h-2.4zM2061.39 1118.69h2.4V1132.81h-2.4zM2068.02 988.28h2.4V1068.68h-2.4zM2071.34 995.42h2.4V1077.21h-2.4zM2074.65 987.58h2.4V1067.63h-2.4zM2077.97 1003.26h2.4V1074.69h-2.4zM2081.28 991.49h2.4V1071.81h-2.4zM2084.60 1137.26h2.4V1148.06h-2.4zM2091.23 999.66h2.4V1072.31h-2.4zM2094.54 997.22h2.4V1067.09h-2.4zM2097.86 999.06h2.4V1076.37h-2.4zM2101.17 979.29h2.4V1056.74h-2.4zM2104.49 999.26h2.4V1065.10h-2.4zM2107.80 1121.22h2.4V1134.88h-2.4zM2114.43 980.96h2.4V1060.96h-2.4zM2117.74 975.75h2.4V1059.77h-2.4zM2121.06 1003.36h2.4V1073.63h-2.4zM2124.38 997.04h2.4V1072.53h-2.4zM2127.69 999.49h2.4V1078.39h-2.4zM2131.01 1138.69h2.4V1149.23h-2.4zM2137.64 988.63h2.4V1067.95h-2.4zM2140.95 988.67h2.4V1069.59h-2.4zM2144.27 989.10h2.4V1065.79h-2.4zM2147.58 1011.97h2.4V1085.14h-2.4zM2150.90 1012.03h2.4V1083.98h-2.4zM2154.21 1111.75h2.4V1127.11h-2.4zM2160.84 1002.57h2.4V1075.41h-2.4zM2164.16 985.42h2.4V1069.28h-2.4zM2167.47 985.15h2.4V1062.81h-2.4zM2174.10 979.70h2.4V1062.27h-2.4zM2177.41 1136.37h2.4V1147.32h-2.4zM2184.05 988.00h2.4V1063.75h-2.4zM2187.36 994.44h2.4V1061.20h-2.4zM2190.68 1003.93h2.4V1076.27h-2.4zM2193.99 993.93h2.4V1058.95h-2.4zM2197.31 991.19h2.4V1064.87h-2.4zM2200.62 1137.63h2.4V1148.36h-2.4zM2207.25 973.31h2.4V1058.84h-2.4zM2210.57 960.15h2.4V1039.19h-2.4zM2213.88 981.88h2.4V1060.37h-2.4zM2217.20 974.78h2.4V1061.71h-2.4zM2220.51 980.02h2.4V1060.74h-2.4zM2223.82 1126.90h2.4V1139.55h-2.4zM2230.45 986.33h2.4V1067.97h-2.4zM2233.77 987.90h2.4V1061.19h-2.4zM2237.09 986.61h2.4V1062.53h-2.4zM2240.40 985.80h2.4V1066.41h-2.4zM2243.72 986.55h2.4V1064.32h-2.4zM2247.03 1104.17h2.4V1120.89h-2.4zM2253.66 979.33h2.4V1058.50h-2.4zM2256.98 989.19h2.4V1065.51h-2.4zM2260.29 979.92h2.4V1056.92h-2.4zM2263.61 987.39h2.4V1060.14h-2.4zM2266.92 1000.49h2.4V1065.85h-2.4zM2270.24 1125.00h2.4V1137.99h-2.4zM2276.86 975.43h2.4V1055.28h-2.4zM2280.18 959.46h2.4V1044.12h-2.4zM2283.49 986.11h2.4V1066.41h-2.4zM2286.81 1019.28h2.4V1082.34h-2.4zM2290.12 1024.12h2.4V1093.56h-2.4zM2293.44 1135.73h2.4V1146.80h-2.4zM2300.07 992.40h2.4V1070.71h-2.4zM2303.39 970.28h2.4V1061.13h-2.4zM2306.70 979.81h2.4V1052.79h-2.4zM2310.02 966.80h2.4V1055.66h-2.4zM2313.33 959.27h2.4V1040.32h-2.4zM2316.65 1109.22h2.4V1125.04h-2.4zM2323.28 980.19h2.4V1057.05h-2.4zM2326.59 971.88h2.4V1049.10h-2.4z"/>
<path fill="#de5b56" d="M848.10 967.89h2.4V1006.28h-2.4zM851.41 986.22h2.4V1021.04h-2.4zM861.36 950.71h2.4V992.94h-2.4zM864.67 956.29h2.4V998.16h-2.4zM867.99 977.92h2.4V1012.87h-2.4zM871.30 981.54h2.4V1015.90h-2.4zM874.62 991.15h2.4V1026.91h-2.4zM884.56 962.06h2.4V998.29h-2.4zM887.88 972.34h2.4V1008.73h-2.4zM891.19 952.91h2.4V995.20h-2.4zM894.51 960.08h2.4V1000.98h-2.4zM897.82 975.72h2.4V1016.01h-2.4zM907.77 970.59h2.4V1004.18h-2.4zM911.08 960.29h2.4V996.87h-2.4zM914.40 971.12h2.4V1007.95h-2.4zM917.71 961.83h2.4V1003.87h-2.4zM921.03 958.91h2.4V999.17h-2.4zM930.97 973.63h2.4V1014.27h-2.4zM934.29 972.31h2.4V1008.90h-2.4zM937.60 953.31h2.4V992.23h-2.4zM940.92 984.12h2.4V1020.11h-2.4zM944.23 986.06h2.4V1019.83h-2.4zM954.18 975.12h2.4V1012.43h-2.4zM960.81 990.96h2.4V1027.44h-2.4zM964.12 948.59h2.4V992.45h-2.4zM967.44 975.37h2.4V1014.21h-2.4zM977.38 967.15h2.4V1002.73h-2.4zM980.70 946.61h2.4V988.04h-2.4zM984.01 964.29h2.4V1001.72h-2.4zM987.33 983.86h2.4V1016.54h-2.4zM990.64 975.02h2.4V1006.02h-2.4zM1000.59 962.43h2.4V1003.69h-2.4zM1003.90 975.61h2.4V1012.17h-2.4zM1007.22 976.51h2.4V1018.06h-2.4zM1010.53 958.73h2.4V996.10h-2.4zM1013.85 981.34h2.4V1015.68h-2.4zM1023.79 973.61h2.4V1014.26h-2.4zM1027.11 957.59h2.4V996.06h-2.4zM1030.42 963.96h2.4V1001.08h-2.4zM1033.74 979.59h2.4V1019.62h-2.4zM1037.05 980.93h2.4V1019.01h-2.4zM1047.00 967.88h2.4V1004.82h-2.4zM1050.31 991.13h2.4V1026.10h-2.4zM1053.63 971.18h2.4V1005.68h-2.4zM1056.94 966.13h2.4V1006.26h-2.4zM1060.26 966.72h2.4V1006.33h-2.4zM1070.20 961.58h2.4V997.86h-2.4zM1073.52 978.67h2.4V1016.04h-2.4zM1076.83 954.27h2.4V994.58h-2.4zM1080.15 974.86h2.4V1012.30h-2.4zM1083.46 981.86h2.4V1012.85h-2.4zM1093.41 965.65h2.4V1004.57h-2.4zM1096.72 944.34h2.4V985.88h-2.4zM1100.04 970.87h2.4V1006.01h-2.4zM1103.35 970.62h2.4V1004.25h-2.4zM1106.67 973.82h2.4V1006.07h-2.4zM1116.62 979.56h2.4V1012.73h-2.4zM1119.93 982.84h2.4V1017.02h-2.4zM1123.24 984.00h2.4V1017.31h-2.4zM1126.56 990.00h2.4V1021.10h-2.4zM1129.87 984.87h2.4V1018.90h-2.4zM1139.82 971.55h2.4V1008.52h-2.4zM1143.13 975.84h2.4V1010.17h-2.4zM1146.45 986.29h2.4V1022.18h-2.4zM1149.76 955.68h2.4V989.73h-2.4zM1153.08 982.98h2.4V1017.15h-2.4zM1166.34 975.87h2.4V1012.76h-2.4zM1169.65 968.94h2.4V1003.19h-2.4zM1172.97 976.60h2.4V1009.65h-2.4zM1176.28 972.58h2.4V1008.75h-2.4zM1186.23 952.90h2.4V994.67h-2.4zM1189.54 969.06h2.4V1004.22h-2.4zM1192.86 981.28h2.4V1012.33h-2.4zM1196.17 975.74h2.4V1011.88h-2.4zM1199.49 961.14h2.4V991.38h-2.4zM1209.43 965.45h2.4V1001.95h-2.4zM1212.75 962.33h2.4V1000.19h-2.4zM1216.06 984.64h2.4V1015.46h-2.4zM1219.38 970.67h2.4V1008.11h-2.4zM1222.69 993.70h2.4V1026.48h-2.4zM1232.64 962.58h2.4V998.32h-2.4zM1235.95 984.36h2.4V1017.71h-2.4zM1239.27 971.61h2.4V1002.43h-2.4zM1242.58 935.80h2.4V974.04h-2.4zM1245.90 973.29h2.4V1006.97h-2.4zM1255.85 960.83h2.4V995.19h-2.4zM1259.16 970.10h2.4V1001.57h-2.4zM1262.47 971.59h2.4V1008.12h-2.4zM1265.79 982.67h2.4V1014.77h-2.4zM1269.10 988.03h2.4V1021.24h-2.4zM1279.05 977.00h2.4V1010.74h-2.4zM1282.37 978.62h2.4V1011.04h-2.4zM1285.68 979.86h2.4V1009.98h-2.4zM1288.99 975.97h2.4V1011.40h-2.4zM1292.31 973.11h2.4V1004.83h-2.4zM1302.25 959.77h2.4V997.78h-2.4zM1305.57 967.82h2.4V1000.34h-2.4zM1308.88 967.91h2.4V1005.42h-2.4zM1312.20 973.80h2.4V1010.64h-2.4zM1315.51 971.01h2.4V1007.64h-2.4zM1325.46 978.68h2.4V1010.55h-2.4zM1328.77 957.25h2.4V993.79h-2.4zM1332.09 959.24h2.4V991.67h-2.4zM1335.40 976.22h2.4V1013.05h-2.4zM1338.72 998.55h2.4V1030.52h-2.4zM1348.66 980.76h2.4V1011.11h-2.4zM1351.98 967.14h2.4V1001.87h-2.4zM1355.29 968.24h2.4V1000.12h-2.4zM1358.61 970.55h2.4V1001.10h-2.4zM1361.92 969.43h2.4V1006.94h-2.4zM1371.87 980.63h2.4V1013.94h-2.4zM1375.18 963.27h2.4V999.19h-2.4zM1378.50 958.06h2.4V994.64h-2.4zM1381.81 963.93h2.4V997.19h-2.4zM1385.13 972.21h2.4V1008.57h-2.4zM1395.08 958.36h2.4V997.34h-2.4zM1398.39 963.34h2.4V1001.68h-2.4zM1401.70 981.42h2.4V1011.03h-2.4zM1405.02 972.78h2.4V1008.10h-2.4zM1408.33 972.28h2.4V1007.27h-2.4zM1418.28 955.89h2.4V999.34h-2.4zM1421.60 979.65h2.4V1012.44h-2.4zM1424.91 995.25h2.4V1025.83h-2.4zM1441.48 966.11h2.4V998.23h-2.4zM1444.80 972.47h2.4V1007.99h-2.4zM1448.12 948.35h2.4V983.33h-2.4zM1451.43 984.31h2.4V1016.20h-2.4zM1454.74 976.67h2.4V1011.51h-2.4zM1464.69 975.18h2.4V1013.66h-2.4zM1468.00 977.32h2.4V1009.23h-2.4zM1471.32 970.22h2.4V1005.69h-2.4zM1474.63 952.14h2.4V984.63h-2.4zM1477.95 966.25h2.4V1001.15h-2.4zM1487.89 990.61h2.4V1023.09h-2.4zM1491.21 985.07h2.4V1015.39h-2.4zM1494.52 962.76h2.4V996.30h-2.4zM1497.84 947.87h2.4V982.25h-2.4zM1501.15 974.19h2.4V1011.43h-2.4zM1511.10 981.10h2.4V1013.57h-2.4zM1514.41 971.60h2.4V1007.87h-2.4zM1517.73 970.17h2.4V1003.86h-2.4zM1521.04 960.51h2.4V995.24h-2.4zM1524.36 992.35h2.4V1020.02h-2.4zM1537.62 1003.49h2.4V1033.83h-2.4zM1540.93 982.28h2.4V1013.34h-2.4zM1544.25 979.48h2.4V1008.94h-2.4zM1547.56 977.16h2.4V1009.09h-2.4zM1560.83 965.86h2.4V1000.92h-2.4zM1564.14 979.01h2.4V1009.05h-2.4zM1567.45 986.14h2.4V1017.52h-2.4zM1570.77 972.59h2.4V1001.75h-2.4zM1580.71 972.25h2.4V1004.54h-2.4zM1584.03 1032.68h2.4V1057.43h-2.4zM1587.35 962.17h2.4V996.23h-2.4zM1590.66 938.89h2.4V978.09h-2.4zM1593.97 959.59h2.4V998.39h-2.4zM1603.92 980.84h2.4V1015.41h-2.4zM1607.23 962.95h2.4V996.96h-2.4zM1610.55 964.05h2.4V998.44h-2.4zM1613.87 949.04h2.4V980.47h-2.4zM1617.18 957.49h2.4V991.23h-2.4zM1627.12 983.06h2.4V1014.35h-2.4zM1630.44 965.36h2.4V1000.74h-2.4zM1633.75 969.38h2.4V1005.79h-2.4zM1637.07 983.93h2.4V1013.66h-2.4zM1640.38 953.24h2.4V987.11h-2.4zM1650.33 992.78h2.4V1023.67h-2.4zM1653.64 986.37h2.4V1019.08h-2.4zM1656.96 975.83h2.4V1009.49h-2.4zM1660.27 970.63h2.4V1003.63h-2.4zM1663.59 965.30h2.4V998.82h-2.4zM1673.53 959.12h2.4V995.72h-2.4zM1676.85 965.99h2.4V1001.01h-2.4zM1680.16 959.70h2.4V991.91h-2.4zM1683.48 955.60h2.4V989.24h-2.4zM1686.79 962.59h2.4V1003.51h-2.4zM1696.74 946.23h2.4V982.98h-2.4zM1700.06 945.90h2.4V979.77h-2.4zM1703.37 988.78h2.4V1020.19h-2.4zM1706.68 969.43h2.4V1001.63h-2.4zM1710.00 966.49h2.4V999.43h-2.4zM1719.94 963.92h2.4V995.23h-2.4zM1723.26 978.86h2.4V1009.37h-2.4zM1726.58 982.15h2.4V1011.31h-2.4zM1729.89 980.23h2.4V1013.90h-2.4zM1733.20 958.54h2.4V993.37h-2.4zM1743.15 970.21h2.4V1001.50h-2.4zM1746.46 972.34h2.4V1005.60h-2.4zM1749.78 967.63h2.4V1006.48h-2.4zM1753.10 957.20h2.4V991.86h-2.4zM1756.41 949.45h2.4V983.21h-2.4zM1766.35 978.79h2.4V1009.88h-2.4zM1769.67 963.49h2.4V993.18h-2.4zM1772.98 966.61h2.4V1000.67h-2.4zM1776.30 973.71h2.4V1009.38h-2.4zM1779.62 959.61h2.4V991.49h-2.4zM1789.56 937.83h2.4V976.62h-2.4zM1792.87 974.80h2.4V1007.81h-2.4zM1796.19 961.10h2.4V995.13h-2.4zM1799.50 953.67h2.4V990.35h-2.4zM1802.82 953.91h2.4V988.74h-2.4zM1812.76 977.44h2.4V1007.71h-2.4zM1816.08 977.88h2.4V1010.57h-2.4zM1819.39 963.73h2.4V1000.65h-2.4zM1822.71 960.63h2.4V997.22h-2.4zM1826.02 961.56h2.4V995.14h-2.4zM1835.97 961.09h2.4V993.10h-2.4zM1839.28 975.17h2.4V1008.49h-2.4zM1842.60 956.66h2.4V989.40h-2.4zM1859.17 936.38h2.4V973.61h-2.4zM1862.49 929.98h2.4V970.85h-2.4zM1865.80 956.63h2.4V993.09h-2.4zM1869.12 945.34h2.4V982.42h-2.4zM1872.43 948.18h2.4V984.01h-2.4zM1882.38 960.09h2.4V991.37h-2.4zM1885.69 977.08h2.4V1014.65h-2.4zM1889.01 967.93h2.4V998.61h-2.4zM1892.32 962.70h2.4V998.13h-2.4zM1895.64 941.06h2.4V978.51h-2.4zM1905.58 950.64h2.4V989.74h-2.4zM1908.90 955.52h2.4V988.90h-2.4zM1912.21 963.42h2.4V999.08h-2.4zM1915.53 962.74h2.4V997.51h-2.4zM1918.84 958.29h2.4V998.03h-2.4zM1928.79 958.29h2.4V990.69h-2.4zM1932.10 941.88h2.4V982.72h-2.4zM1935.42 956.23h2.4V997.25h-2.4zM1938.73 956.36h2.4V993.24h-2.4zM1942.05 951.95h2.4V987.21h-2.4zM1951.99 954.90h2.4V989.23h-2.4zM1955.31 968.91h2.4V1007.93h-2.4zM1958.62 956.30h2.4V991.88h-2.4zM1961.94 939.82h2.4V974.80h-2.4zM1965.25 926.21h2.4V969.96h-2.4zM1975.20 944.17h2.4V979.78h-2.4zM1978.51 963.71h2.4V998.80h-2.4zM1981.83 947.12h2.4V989.75h-2.4zM1985.14 970.37h2.4V1004.89h-2.4zM1988.46 960.77h2.4V1001.10h-2.4zM1998.40 945.43h2.4V983.45h-2.4zM2001.72 966.37h2.4V1005.98h-2.4zM2005.03 969.11h2.4V1004.76h-2.4zM2008.35 933.57h2.4V970.33h-2.4zM2011.66 941.62h2.4V982.72h-2.4zM2021.61 963.34h2.4V999.73h-2.4zM2024.92 934.90h2.4V972.32h-2.4zM2028.24 949.71h2.4V986.88h-2.4zM2031.55 947.29h2.4V983.88h-2.4zM2034.87 957.67h2.4V996.33h-2.4zM2048.13 939.96h2.4V980.17h-2.4zM2051.45 950.01h2.4V982.68h-2.4zM2054.76 936.92h2.4V973.42h-2.4zM2058.07 942.80h2.4V977.32h-2.4zM2068.02 949.03h2.4V988.28h-2.4zM2071.34 955.51h2.4V995.42h-2.4zM2074.65 949.72h2.4V987.58h-2.4zM2077.97 968.15h2.4V1003.26h-2.4zM2081.28 953.11h2.4V991.49h-2.4zM2091.23 962.32h2.4V999.66h-2.4zM2094.54 959.64h2.4V997.22h-2.4zM2097.86 965.30h2.4V999.06h-2.4zM2101.17 943.37h2.4V979.29h-2.4zM2104.49 954.69h2.4V999.26h-2.4zM2114.43 942.76h2.4V980.96h-2.4zM2117.74 931.84h2.4V975.75h-2.4zM2121.06 967.29h2.4V1003.36h-2.4zM2124.38 961.88h2.4V997.04h-2.4zM2127.69 964.27h2.4V999.49h-2.4zM2137.64 951.61h2.4V988.63h-2.4zM2140.95 951.78h2.4V988.67h-2.4zM2144.27 953.70h2.4V989.10h-2.4zM2147.58 974.82h2.4V1011.97h-2.4zM2150.90 973.52h2.4V1012.03h-2.4zM2160.84 963.28h2.4V1002.57h-2.4zM2164.16 946.12h2.4V985.42h-2.4zM2167.47 948.64h2.4V985.15h-2.4zM2174.10 938.15h2.4V979.70h-2.4zM2184.05 943.25h2.4V988.00h-2.4zM2187.36 956.19h2.4V994.44h-2.4zM2190.68 969.12h2.4V1003.93h-2.4zM2193.99 952.25h2.4V993.93h-2.4zM2197.31 950.07h2.4V991.19h-2.4zM2207.25 930.05h2.4V973.31h-2.4zM2210.57 911.66h2.4V960.15h-2.4zM2213.88 945.22h2.4V981.88h-2.4zM2217.20 932.30h2.4V974.78h-2.4zM2220.51 941.70h2.4V980.02h-2.4zM2230.45 946.54h2.4V986.33h-2.4zM2233.77 947.13h2.4V987.90h-2.4zM2237.09 946.09h2.4V986.61h-2.4zM2240.40 943.00h2.4V985.80h-2.4zM2243.72 934.64h2.4V986.55h-2.4zM2253.66 942.63h2.4V979.33h-2.4zM2256.98 947.86h2.4V989.19h-2.4zM2260.29 935.79h2.4V979.92h-2.4zM2263.61 942.47h2.4V987.39h-2.4zM2266.92 957.76h2.4V1000.49h-2.4zM2276.86 928.04h2.4V975.43h-2.4zM2280.18 909.77h2.4V959.46h-2.4zM2283.49 941.57h2.4V986.11h-2.4zM2286.81 981.63h2.4V1019.28h-2.4zM2290.12 988.26h2.4V1024.12h-2.4zM2300.07 946.49h2.4V992.40h-2.4zM2303.39 928.56h2.4V970.28h-2.4zM2306.70 937.24h2.4V979.81h-2.4zM2310.02 921.43h2.4V966.80h-2.4zM2313.33 915.84h2.4V959.27h-2.4zM2323.28 934.65h2.4V980.19h-2.4zM2326.59 929.79h2.4V971.88h-2.4z"/>
<path fill="#f2c914" d="M848.10 922.64h2.4V967.89h-2.4zM851.41 942.75h2.4V986.22h-2.4zM861.36 896.56h2.4V950.71h-2.4zM864.67 903.81h2.4V956.29h-2.4zM867.99 933.01h2.4V977.92h-2.4zM871.30 937.13h2.4V981.54h-2.4zM874.62 942.38h2.4V991.15h-2.4zM884.56 908.20h2.4V962.06h-2.4zM887.88 930.87h2.4V972.34h-2.4zM891.19 892.26h2.4V952.91h-2.4zM894.51 916.84h2.4V960.08h-2.4zM897.82 927.63h2.4V975.72h-2.4zM907.77 917.98h2.4V970.59h-2.4zM911.08 907.30h2.4V960.29h-2.4zM914.40 922.23h2.4V971.12h-2.4zM917.71 911.30h2.4V961.83h-2.4zM921.03 907.04h2.4V958.91h-2.4zM930.97 921.83h2.4V973.63h-2.4zM934.29 923.22h2.4V972.31h-2.4zM937.60 905.22h2.4V953.31h-2.4zM940.92 932.49h2.4V984.12h-2.4zM944.23 938.43h2.4V986.06h-2.4zM954.18 925.45h2.4V975.12h-2.4zM960.81 943.07h2.4V990.96h-2.4zM964.12 904.78h2.4V948.59h-2.4zM967.44 920.21h2.4V975.37h-2.4zM977.38 909.37h2.4V967.15h-2.4zM980.70 889.62h2.4V946.61h-2.4zM984.01 915.81h2.4V964.29h-2.4zM987.33 933.64h2.4V983.86h-2.4zM990.64 921.86h2.4V975.02h-2.4zM1000.59 905.31h2.4V962.43h-2.4zM1003.90 926.01h2.4V975.61h-2.4zM1007.22 921.92h2.4V976.51h-2.4zM1010.53 903.92h2.4V958.73h-2.4zM1013.85 937.61h2.4V981.34h-2.4zM1023.79 923.89h2.4V973.61h-2.4zM1027.11 898.42h2.4V957.59h-2.4zM1030.42 909.96h2.4V963.96h-2.4zM1033.74 929.74h2.4V979.59h-2.4zM1037.05 938.05h2.4V980.93h-2.4zM1047.00 911.99h2.4V967.88h-2.4zM1050.31 944.48h2.4V991.13h-2.4zM1053.63 914.57h2.4V971.18h-2.4zM1056.94 916.93h2.4V966.13h-2.4zM1060.26 914.31h2.4V966.72h-2.4zM1070.20 897.03h2.4V961.58h-2.4zM1073.52 921.52h2.4V978.67h-2.4zM1076.83 901.18h2.4V954.27h-2.4zM1080.15 923.86h2.4V974.86h-2.4zM1083.46 927.42h2.4V981.86h-2.4zM1093.41 907.69h2.4V965.65h-2.4zM1096.72 886.51h2.4V944.34h-2.4zM1100.04 918.09h2.4V970.87h-2.4zM1103.35 915.99h2.4V970.62h-2.4zM1106.67 919.97h2.4V973.82h-2.4zM1116.62 934.85h2.4V979.56h-2.4zM1119.93 935.55h2.4V982.84h-2.4zM1123.24 932.48h2.4V984.00h-2.4zM1126.56 935.71h2.4V990.00h-2.4zM1129.87 934.76h2.4V984.87h-2.4zM1139.82 918.30h2.4V971.55h-2.4zM1143.13 922.90h2.4V975.84h-2.4zM1146.45 935.52h2.4V986.29h-2.4zM1149.76 902.66h2.4V955.68h-2.4zM1153.08 929.89h2.4V982.98h-2.4zM1166.34 919.29h2.4V975.87h-2.4zM1169.65 919.74h2.4V968.94h-2.4zM1172.97 922.42h2.4V976.60h-2.4zM1176.28 919.84h2.4V972.58h-2.4zM1186.23 896.42h2.4V952.90h-2.4zM1189.54 918.85h2.4V969.06h-2.4zM1192.86 930.57h2.4V981.28h-2.4zM1196.17 924.26h2.4V975.74h-2.4zM1199.49 908.79h2.4V961.14h-2.4zM1209.43 911.12h2.4V965.45h-2.4zM1212.75 896.70h2.4V962.33h-2.4zM1216.06 933.46h2.4V984.64h-2.4zM1219.38 918.91h2.4V970.67h-2.4zM1222.69 946.97h2.4V993.70h-2.4zM1232.64 905.63h2.4V962.58h-2.4zM1235.95 937.36h2.4V984.36h-2.4zM1239.27 923.97h2.4V971.61h-2.4zM1242.58 870.99h2.4V935.80h-2.4zM1245.90 923.06h2.4V973.29h-2.4zM1255.85 904.32h2.4V960.83h-2.4zM1259.16 917.80h2.4V970.10h-2.4zM1262.47 912.81h2.4V971.59h-2.4zM1265.79 928.44h2.4V982.67h-2.4zM1269.10 936.83h2.4V988.03h-2.4zM1279.05 919.87h2.4V977.00h-2.4zM1282.37 920.54h2.4V978.62h-2.4zM1285.68 919.16h2.4V979.86h-2.4zM1288.99 919.38h2.4V975.97h-2.4zM1292.31 921.52h2.4V973.11h-2.4zM1302.25 898.15h2.4V959.77h-2.4zM1305.57 910.57h2.4V967.82h-2.4zM1308.88 905.62h2.4V967.91h-2.4zM1312.20 921.01h2.4V973.80h-2.4zM1315.51 917.36h2.4V971.01h-2.4zM1325.46 922.24h2.4V978.68h-2.4zM1328.77 901.14h2.4V957.25h-2.4zM1332.09 903.23h2.4V959.24h-2.4zM1335.40 916.12h2.4V976.22h-2.4zM1338.72 955.30h2.4V998.55h-2.4zM1348.66 931.28h2.4V980.76h-2.4zM1351.98 910.49h2.4V967.14h-2.4zM1355.29 904.93h2.4V968.24h-2.4zM1358.61 907.34h2.4V970.55h-2.4zM1361.92 911.17h2.4V969.43h-2.4zM1371.87 921.21h2.4V980.63h-2.4zM1375.18 900.20h2.4V963.27h-2.4zM1378.50 893.43h2.4V958.06h-2.4zM1381.81 902.63h2.4V963.93h-2.4zM1385.13 921.45h2.4V972.21h-2.4zM1395.08 900.60h2.4V958.36h-2.4zM1398.39 916.31h2.4V963.34h-2.4zM1401.70 928.51h2.4V981.42h-2.4zM1405.02 915.49h2.4V972.78h-2.4zM1408.33 917.33h2.4V972.28h-2.4zM1418.28 896.25h2.4V955.89h-2.4zM1421.60 932.73h2.4V979.65h-2.4zM1424.91 944.30h2.4V995.25h-2.4zM1441.48 910.97h2.4V966.11h-2.4zM1444.80 911.59h2.4V972.47h-2.4zM1448.12 892.00h2.4V948.35h-2.4zM1451.43 929.14h2.4V984.31h-2.4zM1454.74 923.94h2.4V976.67h-2.4zM1464.69 923.27h2.4V975.18h-2.4zM1468.00 922.03h2.4V977.32h-2.4zM1471.32 922.48h2.4V970.22h-2.4zM1474.63 900.72h2.4V952.14h-2.4zM1477.95 909.13h2.4V966.25h-2.4zM1487.89 936.92h2.4V990.61h-2.4zM1491.21 930.43h2.4V985.07h-2.4zM1494.52 912.20h2.4V962.76h-2.4zM1497.84 888.78h2.4V947.87h-2.4zM1501.15 917.65h2.4V974.19h-2.4zM1511.10 930.93h2.4V981.10h-2.4zM1514.41 917.61h2.4V971.60h-2.4zM1517.73 912.93h2.4V970.17h-2.4zM1521.04 907.98h2.4V960.51h-2.4zM1524.36 942.99h2.4V992.35h-2.4zM1537.62 954.48h2.4V1003.49h-2.4zM1540.93 924.57h2.4V982.28h-2.4zM1544.25 924.01h2.4V979.48h-2.4zM1547.56 925.44h2.4V977.16h-2.4zM1560.83 906.72h2.4V965.86h-2.4zM1564.14 926.95h2.4V979.01h-2.4zM1567.45 930.00h2.4V986.14h-2.4zM1570.77 924.82h2.4V972.59h-2.4zM1580.71 915.68h2.4V972.25h-2.4zM1584.03 991.14h2.4V1032.68h-2.4zM1587.35 906.06h2.4V962.17h-2.4zM1590.66 880.20h2.4V938.89h-2.4zM1593.97 905.46h2.4V959.59h-2.4zM1603.92 930.67h2.4V980.84h-2.4zM1607.23 901.14h2.4V962.95h-2.4zM1610.55 912.90h2.4V964.05h-2.4zM1613.87 893.19h2.4V949.04h-2.4zM1617.18 905.34h2.4V957.49h-2.4zM1627.12 930.19h2.4V983.06h-2.4zM1630.44 910.16h2.4V965.36h-2.4zM1633.75 920.38h2.4V969.38h-2.4zM1637.07 934.90h2.4V983.93h-2.4zM1640.38 899.77h2.4V953.24h-2.4zM1650.33 942.64h2.4V992.78h-2.4zM1653.64 942.37h2.4V986.37h-2.4zM1656.96 919.79h2.4V975.83h-2.4zM1660.27 916.30h2.4V970.63h-2.4zM1663.59 917.97h2.4V965.30h-2.4zM1673.53 904.02h2.4V959.12h-2.4zM1676.85 910.09h2.4V965.99h-2.4zM1680.16 905.04h2.4V959.70h-2.4zM1683.48 902.16h2.4V955.60h-2.4zM1686.79 915.29h2.4V962.59h-2.4zM1696.74 892.59h2.4V946.23h-2.4zM1700.06 893.23h2.4V945.90h-2.4zM1703.37 939.65h2.4V988.78h-2.4zM1706.68 914.21h2.4V969.43h-2.4zM1710.00 916.41h2.4V966.49h-2.4zM1719.94 904.18h2.4V963.92h-2.4zM1723.26 923.95h2.4V978.86h-2.4zM1726.58 931.97h2.4V982.15h-2.4zM1729.89 927.20h2.4V980.23h-2.4zM1733.20 904.00h2.4V958.54h-2.4zM1743.15 918.87h2.4V970.21h-2.4zM1746.46 916.12h2.4V972.34h-2.4zM1749.78 913.27h2.4V967.63h-2.4zM1753.10 901.54h2.4V957.20h-2.4zM1756.41 891.92h2.4V949.45h-2.4zM1766.35 924.83h2.4V978.79h-2.4zM1769.67 916.02h2.4V963.49h-2.4zM1772.98 914.54h2.4V966.61h-2.4zM1776.30 927.65h2.4V973.71h-2.4zM1779.62 912.54h2.4V959.61h-2.4zM1789.56 889.89h2.4V937.83h-2.4zM1792.87 927.82h2.4V974.80h-2.4zM1796.19 909.91h2.4V961.10h-2.4zM1799.50 899.58h2.4V953.67h-2.4zM1802.82 903.14h2.4V953.91h-2.4zM1812.76 927.77h2.4V977.44h-2.4zM1816.08 926.86h2.4V977.88h-2.4zM1819.39 913.37h2.4V963.73h-2.4zM1822.71 910.96h2.4V960.63h-2.4zM1826.02 911.45h2.4V961.56h-2.4zM1835.97 900.45h2.4V961.09h-2.4zM1839.28 927.12h2.4V975.17h-2.4zM1842.60 905.70h2.4V956.66h-2.4zM1859.17 886.96h2.4V936.38h-2.4zM1862.49 872.45h2.4V929.98h-2.4zM1865.80 909.67h2.4V956.63h-2.4zM1869.12 894.63h2.4V945.34h-2.4zM1872.43 897.84h2.4V948.18h-2.4zM1882.38 909.80h2.4V960.09h-2.4zM1885.69 929.83h2.4V977.08h-2.4zM1889.01 916.50h2.4V967.93h-2.4zM1892.32 920.15h2.4V962.70h-2.4zM1895.64 879.00h2.4V941.06h-2.4zM1905.58 895.10h2.4V950.64h-2.4zM1908.90 908.28h2.4V955.52h-2.4zM1912.21 914.12h2.4V963.42h-2.4zM1915.53 909.56h2.4V962.74h-2.4zM1918.84 909.11h2.4V958.29h-2.4zM1928.79 899.43h2.4V958.29h-2.4zM1932.10 888.06h2.4V941.88h-2.4zM1935.42 901.34h2.4V956.23h-2.4zM1938.73 897.56h2.4V956.36h-2.4zM1942.05 903.78h2.4V951.95h-2.4zM1951.99 910.44h2.4V954.90h-2.4zM1955.31 914.86h2.4V968.91h-2.4zM1958.62 906.77h2.4V956.30h-2.4zM1961.94 887.94h2.4V939.82h-2.4zM1965.25 872.57h2.4V926.21h-2.4zM1975.20 893.61h2.4V944.17h-2.4zM1978.51 906.48h2.4V963.71h-2.4zM1981.83 894.02h2.4V947.12h-2.4zM1985.14 915.29h2.4V970.37h-2.4zM1988.46 907.84h2.4V960.77h-2.4zM1998.40 895.86h2.4V945.43h-2.4zM2001.72 913.23h2.4V966.37h-2.4zM2005.03 912.31h2.4V969.11h-2.4zM2008.35 885.78h2.4V933.57h-2.4zM2011.66 881.85h2.4V941.62h-2.4zM2021.61 909.30h2.4V963.34h-2.4zM2024.92 882.76h2.4V934.90h-2.4zM2028.24 896.80h2.4V949.71h-2.4zM2031.55 885.40h2.4V947.29h-2.4zM2034.87 901.69h2.4V957.67h-2.4zM2048.13 886.10h2.4V939.96h-2.4zM2051.45 905.52h2.4V950.01h-2.4zM2054.76 883.20h2.4V936.92h-2.4zM2058.07 889.37h2.4V942.80h-2.4zM2068.02 903.65h2.4V949.03h-2.4zM2071.34 902.10h2.4V955.51h-2.4zM2074.65 897.37h2.4V949.72h-2.4zM2077.97 913.23h2.4V968.15h-2.4zM2081.28 901.76h2.4V953.11h-2.4zM2091.23 909.71h2.4V962.32h-2.4zM2094.54 909.72h2.4V959.64h-2.4zM2097.86 908.78h2.4V965.30h-2.4zM2101.17 894.82h2.4V943.37h-2.4zM2104.49 893.47h2.4V954.69h-2.4zM2114.43 886.44h2.4V942.76h-2.4zM2117.74 878.39h2.4V931.84h-2.4zM2121.06 914.51h2.4V967.29h-2.4zM2124.38 913.16h2.4V961.88h-2.4zM2127.69 911.23h2.4V964.27h-2.4zM2137.64 893.94h2.4V951.61h-2.4zM2140.95 897.35h2.4V951.78h-2.4zM2144.27 898.73h2.4V953.70h-2.4zM2147.58 925.28h2.4V974.82h-2.4zM2150.90 924.90h2.4V973.52h-2.4zM2160.84 913.13h2.4V963.28h-2.4zM2164.16 894.31h2.4V946.12h-2.4zM2167.47 897.42h2.4V948.64h-2.4zM2174.10 887.29h2.4V938.15h-2.4zM2184.05 882.13h2.4V943.25h-2.4zM2187.36 899.25h2.4V956.19h-2.4zM2190.68 919.14h2.4V969.12h-2.4zM2193.99 905.88h2.4V952.25h-2.4zM2197.31 901.09h2.4V950.07h-2.4zM2207.25 865.80h2.4V930.05h-2.4zM2210.57 848.71h2.4V911.66h-2.4zM2213.88 889.98h2.4V945.22h-2.4zM2217.20 876.79h2.4V932.30h-2.4zM2220.51 890.05h2.4V941.70h-2.4zM2230.45 890.46h2.4V946.54h-2.4zM2233.77 888.85h2.4V947.13h-2.4zM2237.09 890.72h2.4V946.09h-2.4zM2240.40 889.66h2.4V943.00h-2.4zM2243.72 879.59h2.4V934.64h-2.4zM2253.66 886.32h2.4V942.63h-2.4zM2256.98 899.47h2.4V947.86h-2.4zM2260.29 884.08h2.4V935.79h-2.4zM2263.61 886.38h2.4V942.47h-2.4zM2266.92 905.53h2.4V957.76h-2.4zM2276.86 868.07h2.4V928.04h-2.4zM2280.18 845.44h2.4V909.77h-2.4zM2283.49 883.34h2.4V941.57h-2.4zM2286.81 941.01h2.4V981.63h-2.4zM2290.12 942.47h2.4V988.26h-2.4zM2300.07 887.94h2.4V946.49h-2.4zM2303.39 876.57h2.4V928.56h-2.4zM2306.70 873.55h2.4V937.24h-2.4zM2310.02 870.01h2.4V921.43h-2.4zM2313.33 857.80h2.4V915.84h-2.4zM2323.28 874.94h2.4V934.65h-2.4zM2326.59 879.30h2.4V929.79h-2.4z"/>
<path fill="#3599b8" d="M848.10 905.88h2.4V922.64h-2.4zM851.41 927.73h2.4V942.75h-2.4zM854.73 1149.76h2.4V1152.15h-2.4zM861.36 876.65h2.4V896.56h-2.4zM864.67 886.89h2.4V903.81h-2.4zM867.99 917.18h2.4V933.01h-2.4zM871.30 919.84h2.4V937.13h-2.4zM874.62 929.14h2.4V942.38h-2.4zM877.93 1141.78h2.4V1144.57h-2.4zM884.56 889.94h2.4V908.20h-2.4zM887.88 914.61h2.4V930.87h-2.4zM891.19 875.98h2.4V892.26h-2.4zM894.51 902.86h2.4V916.84h-2.4zM897.82 911.20h2.4V927.63h-2.4zM901.14 1134.47h2.4V1137.63h-2.4zM907.77 900.61h2.4V917.98h-2.4zM911.08 887.94h2.4V907.30h-2.4zM914.40 905.45h2.4V922.23h-2.4zM917.71 895.45h2.4V911.30h-2.4zM921.03 889.89h2.4V907.04h-2.4zM924.34 1141.12h2.4V1143.94h-2.4zM930.97 905.22h2.4V921.83h-2.4zM934.29 906.64h2.4V923.22h-2.4zM937.60 889.27h2.4V905.22h-2.4zM940.92 920.12h2.4V932.49h-2.4zM944.23 923.16h2.4V938.43h-2.4zM947.55 1141.78h2.4V1144.57h-2.4zM954.18 912.27h2.4V925.45h-2.4zM960.81 926.85h2.4V943.07h-2.4zM964.12 885.95h2.4V904.78h-2.4zM967.44 903.91h2.4V920.21h-2.4zM970.75 1137.13h2.4V1140.15h-2.4zM977.38 895.04h2.4V909.37h-2.4zM980.70 873.99h2.4V889.62h-2.4zM984.01 896.98h2.4V915.81h-2.4zM987.33 916.72h2.4V933.64h-2.4zM990.64 906.55h2.4V921.86h-2.4zM993.96 1141.78h2.4V1144.57h-2.4zM1000.59 887.28h2.4V905.31h-2.4zM1003.90 908.94h2.4V926.01h-2.4zM1007.22 905.82h2.4V921.92h-2.4zM1010.53 886.18h2.4V903.92h-2.4zM1013.85 920.53h2.4V937.61h-2.4zM1017.16 1134.47h2.4V1137.63h-2.4zM1023.79 907.88h2.4V923.89h-2.4zM1027.11 883.29h2.4V898.42h-2.4zM1030.42 893.92h2.4V909.96h-2.4zM1033.74 914.70h2.4V929.74h-2.4zM1037.05 921.83h2.4V938.05h-2.4zM1040.37 1138.46h2.4V1141.42h-2.4zM1047.00 895.74h2.4V911.99h-2.4zM1050.31 930.41h2.4V944.48h-2.4zM1053.63 901.23h2.4V914.57h-2.4zM1056.94 901.23h2.4V916.93h-2.4zM1060.26 898.57h2.4V914.31h-2.4zM1063.57 1138.46h2.4V1141.42h-2.4zM1070.20 879.30h2.4V897.03h-2.4zM1073.52 905.67h2.4V921.52h-2.4zM1076.83 882.85h2.4V901.18h-2.4zM1080.15 909.21h2.4V923.86h-2.4zM1083.46 911.87h2.4V927.42h-2.4zM1086.78 1145.77h2.4V1148.36h-2.4zM1093.41 891.93h2.4V907.69h-2.4zM1096.72 870.00h2.4V886.51h-2.4zM1100.04 902.60h2.4V918.09h-2.4zM1103.35 899.19h2.4V915.99h-2.4zM1106.67 905.22h2.4V919.97h-2.4zM1109.98 1137.13h2.4V1140.15h-2.4zM1116.62 921.17h2.4V934.85h-2.4zM1119.93 921.17h2.4V935.55h-2.4zM1123.24 918.51h2.4V932.48h-2.4zM1126.56 921.17h2.4V935.71h-2.4zM1129.87 921.17h2.4V934.76h-2.4zM1133.19 1132.48h2.4V1135.74h-2.4zM1139.82 903.32h2.4V918.30h-2.4zM1143.13 909.26h2.4V922.90h-2.4zM1146.45 921.16h2.4V935.52h-2.4zM1149.76 889.27h2.4V902.66h-2.4zM1153.08 917.18h2.4V929.89h-2.4zM1156.39 1157.07h2.4V1159.09h-2.4zM1166.34 903.23h2.4V919.29h-2.4zM1169.65 905.88h2.4V919.74h-2.4zM1172.97 907.36h2.4V922.42h-2.4zM1176.28 905.65h2.4V919.84h-2.4zM1179.60 1142.45h2.4V1145.20h-2.4zM1186.23 879.30h2.4V896.42h-2.4zM1189.54 904.15h2.4V918.85h-2.4zM1192.86 916.88h2.4V930.57h-2.4zM1196.17 907.19h2.4V924.26h-2.4zM1199.49 893.26h2.4V908.79h-2.4zM1202.80 1133.81h2.4V1137.00h-2.4zM1209.43 896.88h2.4V911.12h-2.4zM1212.75 881.30h2.4V896.70h-2.4zM1216.06 919.17h2.4V933.46h-2.4zM1219.38 904.56h2.4V918.91h-2.4zM1222.69 934.46h2.4V946.97h-2.4zM1226.01 1139.12h2.4V1142.05h-2.4zM1232.64 888.97h2.4V905.63h-2.4zM1235.95 924.14h2.4V937.36h-2.4zM1239.27 908.33h2.4V923.97h-2.4zM1242.58 855.38h2.4V870.99h-2.4zM1245.90 908.55h2.4V923.06h-2.4zM1249.21 1130.49h2.4V1133.84h-2.4zM1255.85 888.61h2.4V904.32h-2.4zM1259.16 901.23h2.4V917.80h-2.4zM1262.47 897.93h2.4V912.81h-2.4zM1265.79 915.16h2.4V928.44h-2.4zM1269.10 923.16h2.4V936.83h-2.4zM1272.42 1138.46h2.4V1141.42h-2.4zM1279.05 906.55h2.4V919.87h-2.4zM1282.37 906.55h2.4V920.54h-2.4zM1285.68 903.89h2.4V919.16h-2.4zM1288.99 906.55h2.4V919.38h-2.4zM1292.31 906.55h2.4V921.52h-2.4zM1295.62 1135.14h2.4V1138.26h-2.4zM1302.25 883.96h2.4V898.15h-2.4zM1305.57 896.22h2.4V910.57h-2.4zM1308.88 891.44h2.4V905.62h-2.4zM1312.20 907.21h2.4V921.01h-2.4zM1315.51 904.56h2.4V917.36h-2.4zM1318.83 1140.45h2.4V1143.31h-2.4zM1325.46 909.91h2.4V922.24h-2.4zM1328.77 885.95h2.4V901.14h-2.4zM1332.09 888.95h2.4V903.23h-2.4zM1335.40 898.96h2.4V916.12h-2.4zM1338.72 943.72h2.4V955.30h-2.4zM1342.03 1138.46h2.4V1141.42h-2.4zM1348.66 919.17h2.4V931.28h-2.4zM1351.98 895.13h2.4V910.49h-2.4zM1355.29 889.94h2.4V904.93h-2.4zM1358.61 892.59h2.4V907.34h-2.4zM1361.92 896.67h2.4V911.17h-2.4zM1365.24 1141.12h2.4V1143.94h-2.4zM1371.87 905.24h2.4V921.21h-2.4zM1375.18 885.59h2.4V900.20h-2.4zM1378.50 875.32h2.4V893.43h-2.4zM1381.81 886.61h2.4V902.63h-2.4zM1385.13 907.32h2.4V921.45h-2.4zM1388.44 1133.81h2.4V1137.00h-2.4zM1395.08 884.98h2.4V900.60h-2.4zM1398.39 901.90h2.4V916.31h-2.4zM1401.70 913.55h2.4V928.51h-2.4zM1405.02 899.24h2.4V915.49h-2.4zM1408.33 901.90h2.4V917.33h-2.4zM1411.65 1149.09h2.4V1151.52h-2.4zM1418.28 879.30h2.4V896.25h-2.4zM1421.60 917.85h2.4V932.73h-2.4zM1424.91 930.47h2.4V944.30h-2.4zM1434.85 1153.08h2.4V1155.30h-2.4zM1441.48 893.73h2.4V910.97h-2.4zM1444.80 895.25h2.4V911.59h-2.4zM1448.12 874.65h2.4V892.00h-2.4zM1451.43 913.99h2.4V929.14h-2.4zM1454.74 909.21h2.4V923.94h-2.4zM1458.06 1134.47h2.4V1137.63h-2.4zM1464.69 906.75h2.4V923.27h-2.4zM1468.00 906.94h2.4V922.03h-2.4zM1471.32 905.75h2.4V922.48h-2.4zM1474.63 882.63h2.4V900.72h-2.4zM1477.95 895.92h2.4V909.13h-2.4zM1481.26 1137.79h2.4V1140.79h-2.4zM1487.89 919.17h2.4V936.92h-2.4zM1491.21 916.52h2.4V930.43h-2.4zM1494.52 894.31h2.4V912.20h-2.4zM1497.84 870.67h2.4V888.78h-2.4zM1501.15 901.39h2.4V917.65h-2.4zM1504.47 1101.91h2.4V1106.70h-2.4zM1511.10 913.99h2.4V930.93h-2.4zM1514.41 902.56h2.4V917.61h-2.4zM1517.73 896.58h2.4V912.93h-2.4zM1521.04 891.93h2.4V907.98h-2.4zM1524.36 927.81h2.4V942.99h-2.4zM1527.67 1155.74h2.4V1157.83h-2.4zM1537.62 941.10h2.4V954.48h-2.4zM1540.93 909.87h2.4V924.57h-2.4zM1544.25 907.21h2.4V924.01h-2.4zM1547.56 909.87h2.4V925.44h-2.4zM1550.88 1129.16h2.4V1132.58h-2.4zM1560.83 890.62h2.4V906.72h-2.4zM1564.14 911.87h2.4V926.95h-2.4zM1567.45 914.04h2.4V930.00h-2.4zM1570.77 909.21h2.4V924.82h-2.4zM1574.08 1134.47h2.4V1137.63h-2.4zM1580.71 897.85h2.4V915.68h-2.4zM1584.03 977.65h2.4V991.14h-2.4zM1587.35 886.61h2.4V906.06h-2.4zM1590.66 860.03h2.4V880.20h-2.4zM1593.97 887.28h2.4V905.46h-2.4zM1597.29 1128.49h2.4V1131.95h-2.4zM1603.92 913.19h2.4V930.67h-2.4zM1607.23 885.41h2.4V901.14h-2.4zM1610.55 895.20h2.4V912.90h-2.4zM1613.87 873.32h2.4V893.19h-2.4zM1617.18 885.79h2.4V905.34h-2.4zM1620.49 1142.77h2.4V1145.52h-2.4zM1627.12 915.31h2.4V930.19h-2.4zM1630.44 891.27h2.4V910.16h-2.4zM1633.75 902.56h2.4V920.38h-2.4zM1637.07 920.25h2.4V934.90h-2.4zM1640.38 879.97h2.4V899.77h-2.4zM1643.70 1121.18h2.4V1125.00h-2.4zM1650.33 927.81h2.4V942.64h-2.4zM1653.64 925.16h2.4V942.37h-2.4zM1656.96 901.90h2.4V919.79h-2.4zM1660.27 899.24h2.4V916.30h-2.4zM1663.59 901.90h2.4V917.97h-2.4zM1666.90 1137.95h2.4V1140.94h-2.4zM1673.53 882.63h2.4V904.02h-2.4zM1676.85 888.84h2.4V910.09h-2.4zM1680.16 885.29h2.4V905.04h-2.4zM1683.48 883.68h2.4V902.16h-2.4zM1686.79 896.19h2.4V915.29h-2.4zM1690.11 1111.88h2.4V1116.17h-2.4zM1696.74 871.33h2.4V892.59h-2.4zM1700.06 873.99h2.4V893.23h-2.4zM1703.37 923.16h2.4V939.65h-2.4zM1706.68 895.92h2.4V914.21h-2.4zM1710.00 898.57h2.4V916.41h-2.4zM1713.31 1128.49h2.4V1131.95h-2.4zM1719.94 881.96h2.4V904.18h-2.4zM1723.26 907.88h2.4V923.95h-2.4zM1726.58 914.10h2.4V931.97h-2.4zM1729.89 910.54h2.4V927.20h-2.4zM1733.20 886.63h2.4V904.00h-2.4zM1736.52 1143.81h2.4V1146.50h-2.4zM1743.15 899.73h2.4V918.87h-2.4zM1746.46 898.57h2.4V916.12h-2.4zM1749.78 895.92h2.4V913.27h-2.4zM1753.10 879.93h2.4V901.54h-2.4zM1756.41 871.33h2.4V891.92h-2.4zM1759.72 1123.84h2.4V1127.53h-2.4zM1766.35 905.36h2.4V924.83h-2.4zM1769.67 899.81h2.4V916.02h-2.4zM1772.98 896.58h2.4V914.54h-2.4zM1776.30 907.90h2.4V927.65h-2.4zM1779.62 893.92h2.4V912.54h-2.4zM1782.93 1131.57h2.4V1134.87h-2.4zM1789.56 868.67h2.4V889.89h-2.4zM1792.87 909.84h2.4V927.82h-2.4zM1796.19 890.95h2.4V909.91h-2.4zM1799.50 879.30h2.4V899.58h-2.4zM1802.82 882.31h2.4V903.14h-2.4zM1806.13 1119.85h2.4V1123.74h-2.4zM1812.76 907.88h2.4V927.77h-2.4zM1816.08 905.22h2.4V926.86h-2.4zM1819.39 892.59h2.4V913.37h-2.4zM1822.71 889.94h2.4V910.96h-2.4zM1826.02 892.59h2.4V911.45h-2.4zM1829.34 1130.49h2.4V1133.84h-2.4zM1835.97 878.64h2.4V900.45h-2.4zM1839.28 906.24h2.4V927.12h-2.4zM1842.60 884.65h2.4V905.70h-2.4zM1845.91 1177.66h2.4V1178.26h-2.4zM1849.23 1175.01h2.4V1175.68h-2.4zM1852.54 1137.79h2.4V1140.79h-2.4zM1859.17 863.36h2.4V886.96h-2.4zM1862.49 849.40h2.4V872.45h-2.4zM1865.80 889.27h2.4V909.67h-2.4zM1869.12 875.98h2.4V894.63h-2.4zM1872.43 878.64h2.4V897.84h-2.4zM1875.75 1115.20h2.4V1119.32h-2.4zM1882.38 890.25h2.4V909.80h-2.4zM1885.69 909.78h2.4V929.83h-2.4zM1889.01 897.33h2.4V916.50h-2.4zM1892.32 900.53h2.4V920.15h-2.4zM1895.64 859.37h2.4V879.00h-2.4zM1898.95 1147.10h2.4V1149.62h-2.4zM1905.58 873.99h2.4V895.10h-2.4zM1908.90 887.28h2.4V908.28h-2.4zM1912.21 894.66h2.4V914.12h-2.4zM1915.53 889.94h2.4V909.56h-2.4zM1918.84 890.00h2.4V909.11h-2.4zM1922.16 1105.23h2.4V1109.85h-2.4zM1928.79 879.34h2.4V899.43h-2.4zM1932.10 866.68h2.4V888.06h-2.4zM1935.42 882.14h2.4V901.34h-2.4zM1938.73 878.64h2.4V897.56h-2.4zM1942.05 886.76h2.4V903.78h-2.4zM1945.36 1118.52h2.4V1122.48h-2.4zM1951.99 892.59h2.4V910.44h-2.4zM1955.31 892.59h2.4V914.86h-2.4zM1958.62 889.94h2.4V906.77h-2.4zM1961.94 871.22h2.4V887.94h-2.4zM1965.25 851.40h2.4V872.57h-2.4zM1968.57 1137.30h2.4V1140.32h-2.4zM1975.20 875.98h2.4V893.61h-2.4zM1978.51 886.36h2.4V906.48h-2.4zM1981.83 873.32h2.4V894.02h-2.4zM1985.14 897.86h2.4V915.29h-2.4zM1988.46 889.94h2.4V907.84h-2.4zM1991.77 1110.55h2.4V1114.90h-2.4zM1998.40 877.25h2.4V895.86h-2.4zM2001.72 897.02h2.4V913.23h-2.4zM2005.03 895.45h2.4V912.31h-2.4zM2008.35 869.27h2.4V885.78h-2.4zM2011.66 862.55h2.4V881.85h-2.4zM2014.98 1141.74h2.4V1144.53h-2.4zM2021.61 893.26h2.4V909.30h-2.4zM2024.92 866.01h2.4V882.76h-2.4zM2028.24 881.96h2.4V896.80h-2.4zM2031.55 868.67h2.4V885.40h-2.4zM2034.87 884.62h2.4V901.69h-2.4zM2038.18 1128.49h2.4V1131.95h-2.4zM2048.13 869.34h2.4V886.10h-2.4zM2051.45 890.38h2.4V905.52h-2.4zM2054.76 866.68h2.4V883.20h-2.4zM2058.07 873.74h2.4V889.37h-2.4zM2061.39 1114.54h2.4V1118.69h-2.4zM2068.02 887.91h2.4V903.65h-2.4zM2071.34 885.72h2.4V902.10h-2.4zM2074.65 881.96h2.4V897.37h-2.4zM2077.97 898.01h2.4V913.23h-2.4zM2081.28 888.73h2.4V901.76h-2.4zM2084.60 1134.09h2.4V1137.26h-2.4zM2091.23 895.25h2.4V909.71h-2.4zM2094.54 895.25h2.4V909.72h-2.4zM2097.86 892.59h2.4V908.78h-2.4zM2101.17 881.30h2.4V894.82h-2.4zM2104.49 878.64h2.4V893.47h-2.4zM2107.80 1117.20h2.4V1121.22h-2.4zM2114.43 871.04h2.4V886.44h-2.4zM2117.74 861.99h2.4V878.39h-2.4zM2121.06 899.24h2.4V914.51h-2.4zM2124.38 899.24h2.4V913.16h-2.4zM2127.69 896.58h2.4V911.23h-2.4zM2131.01 1135.59h2.4V1138.69h-2.4zM2137.64 881.30h2.4V893.94h-2.4zM2140.95 883.96h2.4V897.35h-2.4zM2144.27 883.96h2.4V898.73h-2.4zM2147.58 914.52h2.4V925.28h-2.4zM2150.90 911.86h2.4V924.90h-2.4zM2154.21 1107.23h2.4V1111.75h-2.4zM2160.84 899.90h2.4V913.13h-2.4zM2164.16 881.30h2.4V894.31h-2.4zM2167.47 883.96h2.4V897.42h-2.4zM2174.10 873.27h2.4V887.29h-2.4zM2177.41 1133.14h2.4V1136.37h-2.4zM2184.05 868.01h2.4V882.13h-2.4zM2187.36 885.22h2.4V899.25h-2.4zM2190.68 906.15h2.4V919.14h-2.4zM2193.99 891.93h2.4V905.88h-2.4zM2197.31 889.27h2.4V901.09h-2.4zM2200.62 1134.47h2.4V1137.63h-2.4zM2207.25 852.42h2.4V865.80h-2.4zM2210.57 834.12h2.4V848.71h-2.4zM2213.88 876.91h2.4V889.98h-2.4zM2217.20 862.03h2.4V876.79h-2.4zM2220.51 876.95h2.4V890.05h-2.4zM2223.82 1123.18h2.4V1126.90h-2.4zM2230.45 877.31h2.4V890.46h-2.4zM2233.77 874.65h2.4V888.85h-2.4zM2237.09 877.31h2.4V890.72h-2.4zM2240.40 877.31h2.4V889.66h-2.4zM2243.72 865.36h2.4V879.59h-2.4zM2247.03 1099.25h2.4V1104.17h-2.4zM2253.66 873.99h2.4V886.32h-2.4zM2256.98 887.24h2.4V899.47h-2.4zM2260.29 871.33h2.4V884.08h-2.4zM2263.61 873.99h2.4V886.38h-2.4zM2266.92 893.92h2.4V905.53h-2.4zM2270.24 1121.18h2.4V1125.00h-2.4zM2276.86 856.05h2.4V868.07h-2.4zM2280.18 834.12h2.4V845.44h-2.4zM2283.49 871.05h2.4V883.34h-2.4zM2286.81 931.14h2.4V941.01h-2.4zM2290.12 933.79h2.4V942.47h-2.4zM2293.44 1132.47h2.4V1135.73h-2.4zM2300.07 876.59h2.4V887.94h-2.4zM2303.39 864.69h2.4V876.57h-2.4zM2306.70 862.03h2.4V873.55h-2.4zM2310.02 858.66h2.4V870.01h-2.4zM2313.33 845.42h2.4V857.80h-2.4zM2316.65 1104.57h2.4V1109.22h-2.4zM2323.28 864.89h2.4V874.94h-2.4zM2326.59 866.18h2.4V879.30h-2.4z"/>
<g font-family="Liberation Sans" font-size="15" fill="#333" stroke="#333" stroke-width="0.25">
<text x="850.4" y="862.2">483</text>
<text x="880.1" y="861.7">484</text>
<text x="873.3" y="875.8">463</text>
<text x="899.9" y="873.7">466</text>
<text x="926.5" y="874.7">464</text>
<text x="953.0" y="871.6">469</text>
<text x="969.7" y="859.1">487</text>
<text x="989.5" y="872.6">467</text>
<text x="1016.0" y="868.5">473</text>
<text x="1018.7" y="879.4">457</text>
<text x="1058.8" y="864.8">479</text>
<text x="848.9" y="891.4">439</text>
<text x="857.2" y="901.8">422</text>
<text x="863.4" y="914.3">404</text>
<text x="886.9" y="896.6">431</text>
<text x="920.8" y="890.3">440</text>
<text x="933.3" y="908.6">413</text>
<text x="979.6" y="891.4">438</text>
<text x="1013.0" y="892.4">436</text>
<text x="1025.5" y="907.0">415</text>
<text x="1049.5" y="883.6">450</text>
<text x="1069.3" y="894.5">434</text>
<text x="1085.5" y="855.3">493</text>
<text x="1082.4" y="877.2">460</text>
<text x="1096.0" y="890.2">440</text>
<text x="1112.6" y="903.8">420</text>
<text x="1139.2" y="874.1">464</text>
<text x="1142.3" y="902.2">422</text>
<text x="1155.4" y="888.2">443</text>
<text x="1175.2" y="864.7">479</text>
<text x="1201.7" y="866.3">476</text>
<text x="1188.7" y="878.3">458</text>
<text x="1208.5" y="890.2">441</text>
<text x="1205.4" y="903.8">419</text>
<text x="1212.1" y="919.4">396</text>
<text x="1231.4" y="840.2">515</text>
<text x="1244.5" y="873.0">465</text>
<text x="1248.0" y="886.1">446</text>
<text x="1274.7" y="889.2">442</text>
<text x="1258.5" y="908.0">413</text>
<text x="1291.1" y="869.5">472</text>
<text x="1317.3" y="871.3">469</text>
<text x="1344.2" y="875.4">463</text>
<text x="1370.5" y="871.9">468</text>
<text x="1367.0" y="860.2">485</text>
<text x="1305.0" y="890.0">441</text>
<text x="1337.8" y="904.5">419</text>
<text x="1393.8" y="884.1">449</text>
<text x="1407.2" y="864.9">479</text>
<text x="1410.1" y="903.4">421</text>
<text x="1413.6" y="916.2">402</text>
<text x="1437.0" y="860.2">486</text>
<text x="1432.9" y="880.6">455</text>
<text x="1443.4" y="894.0">434</text>
<text x="1463.2" y="867.2">474</text>
<text x="1466.2" y="880.6">454</text>
<text x="1486.6" y="856.1">492</text>
<text x="1480.2" y="901.6">423</text>
<text x="1509.9" y="877.1">460</text>
<text x="1502.9" y="887.6">444</text>
<text x="1512.8" y="912.7">406</text>
<text x="1526.3" y="926.1">386</text>
<text x="1532.7" y="891.7">437</text>
<text x="1559.7" y="894.6">434</text>
<text x="1573.0" y="962.6">331</text>
<text x="1580.0" y="845.6">508</text>
<text x="1576.2" y="872.3">468</text>
<text x="1592.8" y="898.4">428</text>
<text x="1603.0" y="858.3">488</text>
<text x="1619.5" y="876.1">461</text>
<text x="1629.6" y="865.3">478</text>
<text x="1622.7" y="887.6">444</text>
<text x="1649.4" y="884.4">449</text>
<text x="1642.4" y="910.5">410</text>
<text x="1662.7" y="867.2">474</text>
<text x="1685.6" y="856.4">491</text>
<text x="1695.1" y="880.6">454</text>
<text x="1692.0" y="908.5">413</text>
<text x="1708.5" y="867.2">475</text>
<text x="1712.3" y="893.3">436</text>
<text x="1738.4" y="881.2">454</text>
<text x="1744.7" y="856.4">491</text>
<text x="1767.6" y="879.3">457</text>
<text x="1777.8" y="853.2">495</text>
<text x="1788.0" y="865.3">479</text>
<text x="1805.8" y="890.5">440</text>
<text x="1811.6" y="874.7">463</text>
<text x="1825.0" y="863.6">480</text>
<text x="1851.9" y="834.4">524</text>
<text x="1848.4" y="848.4">503</text>
<text x="1857.7" y="861.3">484</text>
<text x="1854.8" y="874.1">464</text>
<text x="1884.5" y="844.4">509</text>
<text x="1894.5" y="858.4">487</text>
<text x="1897.4" y="872.4">467</text>
<text x="1921.3" y="851.4">498</text>
<text x="1927.1" y="863.6">480</text>
<text x="1954.0" y="836.8">521</text>
<text x="1947.6" y="874.7">463</text>
<text x="1970.9" y="858.4">488</text>
<text x="1976.7" y="874.7">463</text>
<text x="2009.4" y="878.8">458</text>
<text x="2017.0" y="867.1">475</text>
<text x="2013.5" y="851.4">499</text>
<text x="2043.8" y="851.4">498</text>
<text x="2063.2" y="867.0">475</text>
<text x="2093.0" y="864.7">480</text>
<text x="2086.0" y="877.8">459</text>
<text x="2115.7" y="882.6">453</text>
<text x="2126.5" y="867.0">476</text>
<text x="2152.7" y="867.0">476</text>
<text x="2149.0" y="885.0">448</text>
<text x="2139.6" y="896.9">430</text>
<text x="2171.8" y="852.7">496</text>
<text x="2185.0" y="874.2">464</text>
<text x="2199.3" y="819.3">547</text>
<text x="2205.2" y="846.8">505</text>
<text x="2222.0" y="859.9">486</text>
<text x="2248.2" y="856.3">491</text>
<text x="2255.4" y="879.0">457</text>
<text x="2268.5" y="819.3">547</text>
<text x="2265.0" y="842.0">514</text>
<text x="2275.7" y="916.0">401</text>
<text x="2301.9" y="830.0">530</text>
<text x="2294.7" y="846.8">505</text>
<text x="850.0" y="1136.0">72</text>
<text x="852.8" y="1177.0">10</text>
<text x="871.2" y="1128.2">84</text>
<text x="876.1" y="1176.4">12</text>
<text x="894.6" y="1120.4">95</text>
<text x="899.5" y="1176.4">12</text>
<text x="917.2" y="1126.8">85</text>
<text x="922.2" y="1176.4">12</text>
<text x="940.6" y="1128.2">84</text>
<text x="944.9" y="1164.3">29</text>
<text x="964.7" y="1123.2">91</text>
<text x="969.7" y="1175.0">13</text>
<text x="987.4" y="1127.5">84</text>
<text x="991.0" y="1167.2">24</text>
<text x="1010.0" y="1120.4">95</text>
<text x="1015.0" y="1175.0">13</text>
<text x="1033.4" y="1124.6">89</text>
<text x="1038.4" y="1172.8">16</text>
<text x="1056.8" y="1124.6">89</text>
<text x="1061.8" y="1173.5">15</text>
<text x="1081.0" y="1131.7">78</text>
<text x="1083.8" y="1162.2">32</text>
<text x="1103.6" y="1123.2">91</text>
<text x="1108.6" y="1175.0">13</text>
<text x="1127.0" y="1118.3">98</text>
<text x="1129.8" y="1161.5">34</text>
<text x="1149.7" y="1143.1">61</text>
<text x="1154.6" y="1176.4">12</text>
<text x="1173.5" y="1128.7">83</text>
<text x="1176.3" y="1163.5">31</text>
<text x="1196.8" y="1120.2">96</text>
<text x="1201.0" y="1172.0">18</text>
<text x="1219.5" y="1125.2">88</text>
<text x="1223.0" y="1163.5">31</text>
<text x="1240.0" y="1116.7">101</text>
<text x="1247.2" y="1172.0">18</text>
<text x="1265.6" y="1124.5">89</text>
<text x="1269.1" y="1160.0">35</text>
<text x="1289.7" y="1121.6">94</text>
<text x="1294.0" y="1172.0">18</text>
<text x="1312.4" y="1125.9">86</text>
<text x="1315.9" y="1162.0">32</text>
<text x="1335.7" y="1124.5">89</text>
<text x="1340.7" y="1172.7">16</text>
<text x="1358.4" y="1126.6">85</text>
<text x="1362.7" y="1162.8">31</text>
<text x="1382.5" y="1119.5">96</text>
<text x="1386.8" y="1170.5">19</text>
<text x="1405.9" y="1135.1">73</text>
<text x="1408.7" y="1163.5">31</text>
<text x="1428.6" y="1138.7">67</text>
<text x="1432.8" y="1171.3">19</text>
<text x="1451.2" y="1120.2">95</text>
<text x="1455.5" y="1164.2">29</text>
<text x="1474.6" y="1123.1">90</text>
<text x="1479.6" y="1171.3">18</text>
<text x="1495.0" y="1087.6">144</text>
<text x="1502.0" y="1164.2">29</text>
<text x="1521.9" y="1141.5">63</text>
<text x="1541.0" y="1114.6">103</text>
<text x="1548.8" y="1173.4">15</text>
<text x="1568.0" y="1119.5">95</text>
<text x="1572.2" y="1172.0">18</text>
<text x="1587.8" y="1114.6">104</text>
<text x="1594.9" y="1161.3">34</text>
<text x="1617.5" y="1165.6">28</text>
<text x="1633.8" y="1106.8">115</text>
<text x="1641.0" y="1157.8">39</text>
<text x="1665.0" y="1172.7">16</text>
<text x="1680.6" y="1098.3">129</text>
<text x="1687.0" y="1158.5">37</text>
<text x="1703.3" y="1114.6">104</text>
<text x="1711.8" y="1174.1">14</text>
<text x="1733.0" y="1156.4">41</text>
<text x="1750.0" y="1109.6">111</text>
<text x="1757.9" y="1172.0">18</text>
<text x="1779.8" y="1158.5">37</text>
<text x="1796.1" y="1106.1">117</text>
<text x="1803.9" y="1173.4">15</text>
<text x="1819.0" y="1116.4">101</text>
<text x="1826.0" y="1149.7">53</text>
<text x="1845.5" y="1123.4">90</text>
<text x="1842.0" y="1162.0">34</text>
<text x="1864.8" y="1100.7">124</text>
<text x="1871.7" y="1146.0">56</text>
<text x="1896.0" y="1170.6">21</text>
<text x="1912.0" y="1092.0">139</text>
<text x="1919.0" y="1160.0">35</text>
<text x="1934.7" y="1104.2">119</text>
<text x="1941.7" y="1170.6">19</text>
<text x="1980.0" y="1095.5">131</text>
<text x="1964.4" y="1163.6">31</text>
<text x="1988.9" y="1170.6">18</text>
<text x="2027.2" y="1114.7">104</text>
<text x="2011.5" y="1156.6">40</text>
<text x="2036.0" y="1174.0">15</text>
<text x="2050.0" y="1100.7">125</text>
<text x="2057.0" y="1158.4">38</text>
<text x="2081.4" y="1170.6">18</text>
<text x="2097.0" y="1104.2">121</text>
<text x="2104.0" y="1162.0">34</text>
<text x="2126.9" y="1170.6">20</text>
<text x="2144.3" y="1093.7">136</text>
<text x="2151.3" y="1146.0">55</text>
<text x="2170.6" y="1120.0">97</text>
<text x="2174.0" y="1170.6">20</text>
<text x="2193.3" y="1120.0">95</text>
<text x="2196.8" y="1162.0">33</text>
<text x="2212.5" y="1109.4">112</text>
<text x="2219.5" y="1162.0">33</text>
<text x="2237.0" y="1085.0">148</text>
<text x="2242.2" y="1162.0">33</text>
<text x="2259.7" y="1107.7">115</text>
<text x="2266.7" y="1167.1">25</text>
<text x="2289.4" y="1165.4">28</text>
<text x="2303.4" y="1090.2">140</text>
<text x="2310.4" y="1162.0">33</text>
</g>
</svg>
</div></body></html>
